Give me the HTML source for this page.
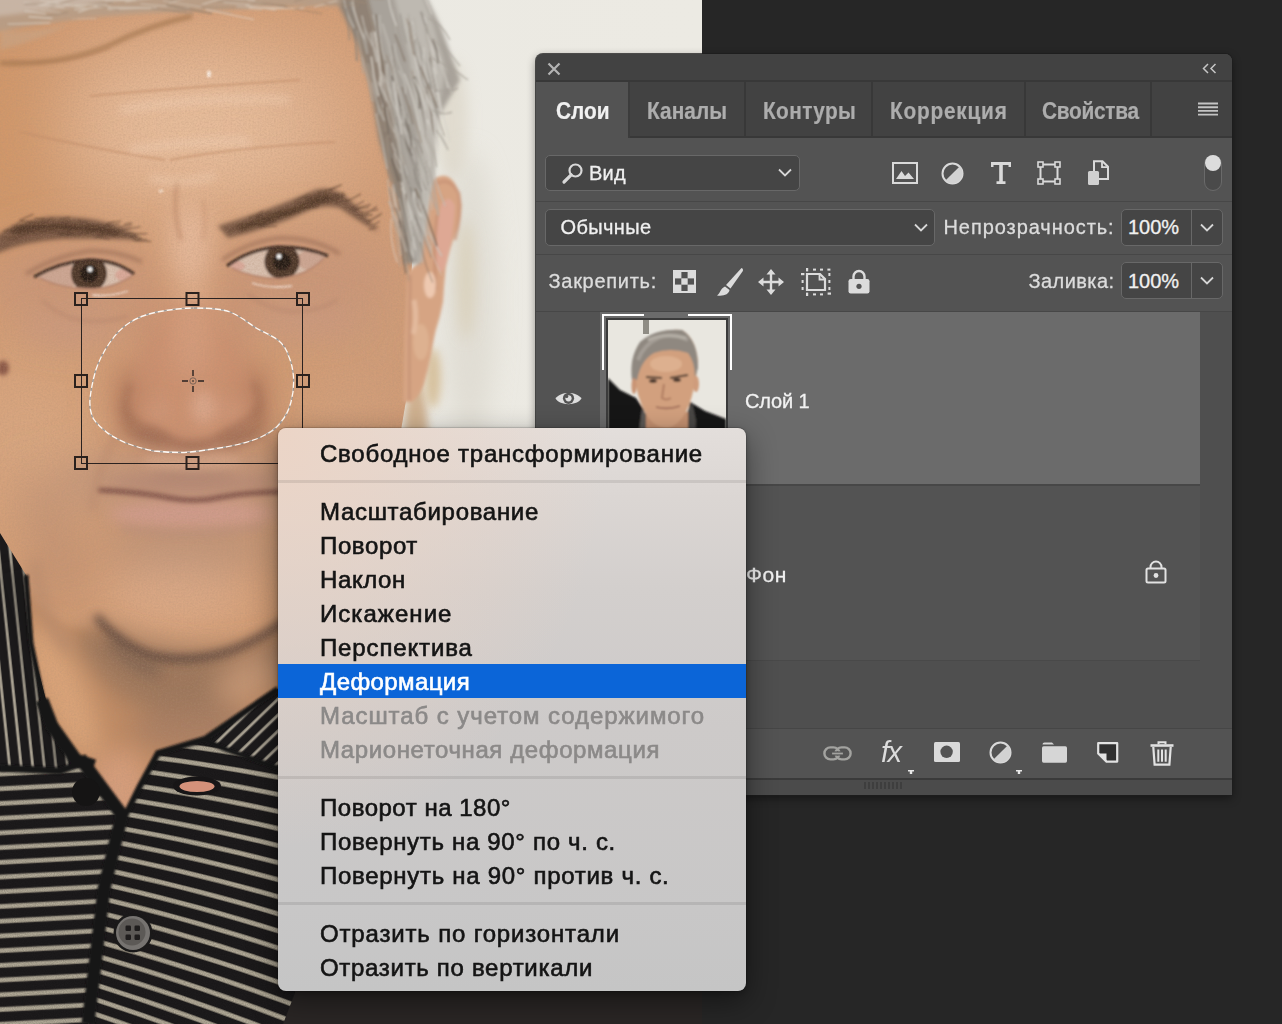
<!DOCTYPE html>
<html lang="ru">
<head>
<meta charset="utf-8">
<title>Photoshop</title>
<style>
html,body{margin:0;padding:0;}
body{width:1282px;height:1024px;overflow:hidden;background:#262626;position:relative;font-family:"Liberation Sans",sans-serif;}
.abs{position:absolute;}
#photo{position:absolute;left:0;top:0;width:702px;height:1024px;overflow:hidden;background:#e9e7df;}
#photo svg{position:absolute;left:0;top:0;}
/* ---------- panel ---------- */
#panel{position:absolute;left:536px;top:54px;width:696px;height:741px;background:#535353;border-radius:7px 7px 0 0;box-shadow:0 0 0 1px rgba(30,30,30,.75),0 3px 10px rgba(0,0,0,.45);overflow:hidden;}
#panel .hdr{position:absolute;left:0;top:0;width:696px;height:26px;background:#424242;}
#panel .hline{position:absolute;left:0;width:696px;height:2px;background:#383838;}
#panel .tabs{position:absolute;left:0;top:28px;width:696px;height:54px;background:#424242;}
.tab{position:absolute;top:28px;height:54px;box-sizing:border-box;border-right:2px solid #383838;color:#adadad;font-weight:700;font-size:20px;line-height:54px;white-space:nowrap;-webkit-text-stroke:.2px currentColor;}
.tab span{position:absolute;top:2px;font-size:23px;transform:scaleX(.905);transform-origin:0 50%;}
.tab.act{background:#535353;color:#f1f1f1;height:56px;border-right:2px solid #3c3c3c;}
.t{position:absolute;white-space:nowrap;font-size:20px;line-height:24px;color:#dcdcdc;-webkit-text-stroke:.3px currentColor;}
.box{position:absolute;box-sizing:border-box;background:#454545;border:1px solid #686868;border-radius:5px;}
.ico{position:absolute;overflow:visible;}
/* ---------- menu ---------- */
#menu{position:absolute;left:278px;top:428px;width:468px;height:563px;border-radius:8px;overflow:hidden;
 box-shadow:0 0 0 1px rgba(0,0,0,.12),0 10px 30px rgba(0,0,0,.45),0 2px 6px rgba(0,0,0,.25);
 background:
  radial-gradient(ellipse 330px 420px at 0px 0px,rgba(236,212,197,.95),rgba(236,212,197,0) 100%),
  linear-gradient(180deg,#e3dedb 0px,#dbd6d3 70px,#d3cfcd 160px,#cdcac9 300px,#c8c7c7 480px,#c5c5c5 563px);}
#menu .mi{position:absolute;left:42px;font-size:24px;line-height:34px;height:34px;color:#141414;white-space:nowrap;margin-top:1px;-webkit-text-stroke:.62px currentColor;}
#menu .mi.dis{color:#8b8988;}
#menu .hl{position:absolute;left:0;top:236px;width:468px;height:34px;background:#0b65d8;}
#menu .sep{position:absolute;left:0;width:468px;height:3px;margin-top:-1px;background:rgba(0,0,0,.085);}
</style>
</head>
<body>
<div id="photo">
<svg width="702" height="1024" viewBox="0 0 702 1024">
<defs>
<filter id="b1" filterUnits="userSpaceOnUse" x="-60" y="-60" width="830" height="1150"><feGaussianBlur stdDeviation="1"/></filter>
<filter id="b15" filterUnits="userSpaceOnUse" x="-60" y="-60" width="830" height="1150"><feGaussianBlur stdDeviation="1.5"/></filter>
<filter id="b2" filterUnits="userSpaceOnUse" x="-60" y="-60" width="830" height="1150"><feGaussianBlur stdDeviation="2.2"/></filter>
<filter id="b4" filterUnits="userSpaceOnUse" x="-60" y="-60" width="830" height="1150"><feGaussianBlur stdDeviation="4"/></filter>
<filter id="b7" filterUnits="userSpaceOnUse" x="-60" y="-60" width="830" height="1150"><feGaussianBlur stdDeviation="7"/></filter>
<filter id="b12" filterUnits="userSpaceOnUse" x="-60" y="-60" width="830" height="1150"><feGaussianBlur stdDeviation="12"/></filter>
<filter id="b22" filterUnits="userSpaceOnUse" x="-60" y="-60" width="830" height="1150"><feGaussianBlur stdDeviation="22"/></filter>
<filter id="b40" filterUnits="userSpaceOnUse" x="-60" y="-60" width="830" height="1150"><feGaussianBlur stdDeviation="40"/></filter>
<filter id="noise" x="0" y="0" width="100%" height="100%"><feTurbulence type="fractalNoise" baseFrequency="0.55" numOctaves="2" seed="3"/><feColorMatrix type="matrix" values="0 0 0 0 0.45  0 0 0 0 0.28  0 0 0 0 0.18  0.9 0.9 0 0 -0.72"/></filter>
<filter id="noise2" x="0" y="0" width="100%" height="100%"><feTurbulence type="fractalNoise" baseFrequency="0.9" numOctaves="1" seed="8"/><feColorMatrix type="matrix" values="0 0 0 0 0  0 0 0 0 0  0 0 0 0 0  0.7 0.7 0 0 -0.5"/></filter>
<pattern id="st" width="40" height="14.7" patternUnits="userSpaceOnUse"><rect width="40" height="14.7" fill="#1d1b1c"/><rect y="4.5" width="40" height="5.4" fill="#777165"/><rect y="5.4" width="40" height="3.6" fill="#b1a997"/></pattern>
<pattern id="stc" width="40" height="11.5" patternUnits="userSpaceOnUse"><rect width="40" height="11.5" fill="#1c1a1b"/><rect y="3.8" width="40" height="3.4" fill="#6f6a60"/><rect y="4.5" width="40" height="2" fill="#ada595"/></pattern>
<linearGradient id="wall" x1="0" x2="1" y1="0" y2="0"><stop offset="0" stop-color="#e2dfd6"/><stop offset="0.35" stop-color="#ebe9e2"/><stop offset="1" stop-color="#eceae3"/></linearGradient>
<clipPath id="skinclip"><path d="M0,0 H420 L426,120 L426,180 L412,262 L408,340 L406,400 L401,430 L398,520 L380,600 L360,700 L300,830 L0,830 Z"/></clipPath>
</defs>
<rect x="0" y="0" width="702" height="1024" fill="url(#wall)"/>
<ellipse cx="416" cy="440" rx="12" ry="60" fill="#c7a27a" opacity=".8" filter="url(#b4)"/>
<ellipse cx="470" cy="300" rx="26" ry="150" fill="#dcd8ce" opacity=".7" filter="url(#b12)"/>
<ellipse cx="452" cy="120" rx="16" ry="60" fill="#d9d2c2" opacity=".6" filter="url(#b7)"/>
<ellipse cx="466" cy="280" rx="9" ry="60" fill="#d8cdb4" opacity=".7" filter="url(#b7)"/>
<g clip-path="url(#skinclip)">
<rect x="0" y="0" width="460" height="840" fill="#d29c74"/>
<g filter="url(#b40)">
<ellipse cx="205" cy="125" rx="150" ry="85" fill="#e9c0a0" opacity=".9"/>
<ellipse cx="5" cy="140" rx="70" ry="130" fill="#cf9566" opacity=".85"/>
<ellipse cx="375" cy="330" rx="45" ry="140" fill="#cc9c7c" opacity=".75"/>
<ellipse cx="25" cy="440" rx="80" ry="90" fill="#d9a985" opacity=".8"/>
<ellipse cx="340" cy="120" rx="50" ry="90" fill="#d9a884" opacity=".7"/>
</g>
<g filter="url(#b22)">
<ellipse cx="75" cy="285" rx="90" ry="48" fill="#c8957a" opacity=".7"/>
<ellipse cx="300" cy="280" rx="90" ry="48" fill="#c8957a" opacity=".7"/>
<ellipse cx="192" cy="395" rx="78" ry="62" fill="#ca9070" opacity=".6"/>
<ellipse cx="190" cy="482" rx="135" ry="28" fill="#b8907b" opacity=".85"/>
<ellipse cx="190" cy="548" rx="95" ry="22" fill="#b38d78" opacity=".75"/>
<ellipse cx="178" cy="598" rx="75" ry="32" fill="#dcab88" opacity=".9"/>
<ellipse cx="52" cy="540" rx="18" ry="75" fill="#b38870" opacity=".65" transform="rotate(-18 52 540)"/>
<ellipse cx="340" cy="430" rx="45" ry="60" fill="#d3a07c" opacity=".7"/>
</g>
<g filter="url(#b12)">
<ellipse cx="190" cy="245" rx="22" ry="42" fill="#e8bc9f" opacity=".85"/>
<ellipse cx="192" cy="330" rx="19" ry="52" fill="#e0b092" opacity=".75"/>
<ellipse cx="130" cy="398" rx="15" ry="34" fill="#b0785b" opacity=".75"/>
<ellipse cx="254" cy="398" rx="15" ry="34" fill="#b0785b" opacity=".75"/>
<ellipse cx="72" cy="330" rx="52" ry="20" fill="#c99a80" opacity=".6"/>
<ellipse cx="306" cy="322" rx="56" ry="20" fill="#c99a80" opacity=".6"/>
<ellipse cx="150" cy="330" rx="14" ry="40" fill="#c69073" opacity=".6"/>
<ellipse cx="235" cy="330" rx="14" ry="40" fill="#c69073" opacity=".6"/>
</g>
<g filter="url(#b7)">
<ellipse cx="150" cy="437" rx="24" ry="7" fill="#8c5a47" opacity=".8" transform="rotate(16 150 437)"/>
<ellipse cx="238" cy="437" rx="24" ry="7" fill="#8c5a47" opacity=".8" transform="rotate(-16 238 437)"/>
<ellipse cx="193" cy="447" rx="24" ry="6" fill="#a06c56" opacity=".75"/>
<ellipse cx="128" cy="418" rx="6" ry="18" fill="#a06c52" opacity=".7"/>
<ellipse cx="258" cy="418" rx="6" ry="18" fill="#a06c52" opacity=".7"/>
<ellipse cx="203" cy="407" rx="12" ry="17" fill="#ecc2ab" opacity=".85"/>
<ellipse cx="160" cy="410" rx="14" ry="12" fill="#d39c80" opacity=".7"/>
<ellipse cx="230" cy="410" rx="14" ry="12" fill="#d39c80" opacity=".7"/>
<ellipse cx="192" cy="514" rx="82" ry="13" fill="#d09c8e" opacity=".9"/>
<ellipse cx="192" cy="483" rx="85" ry="8" fill="#b38674" opacity=".75"/>
<ellipse cx="192" cy="470" rx="40" ry="6" fill="#a9826f" opacity=".6"/>
</g>
<path d="M163,300 C158,330 140,355 130,385 C122,405 126,420 140,424 C152,428 160,430 168,436 C180,446 206,446 218,436 C228,428 240,424 250,418 C262,410 260,395 252,380 C240,352 222,330 216,300 Z" fill="#c98d6e" opacity=".45" filter="url(#b4)"/>
<g fill="none" filter="url(#b4)"><path d="M131,384 C121,405 125,421 142,425" stroke="#9c6850" stroke-width="6" opacity=".7"/><path d="M253,381 C263,400 261,413 247,420" stroke="#9c6850" stroke-width="6" opacity=".7"/><path d="M142,427 Q158,430 168,438 Q192,452 218,438 Q230,429 248,421" stroke="#93604a" stroke-width="5" opacity=".75"/></g>
<ellipse cx="192" cy="462" rx="50" ry="8" fill="#d9a98b" opacity=".7" filter="url(#b4)"/>
<path d="M98,490 Q140,492 170,498 Q196,503 222,497 Q250,492 282,492" fill="none" stroke="#7b5046" stroke-width="5" opacity=".9" filter="url(#b2)"/>
<path d="M120,528 Q190,540 262,526" fill="none" stroke="#b48a78" stroke-width="5" opacity=".6" filter="url(#b4)"/>
<g fill="none" stroke="#c38e6a" stroke-width="2.2" opacity=".6" filter="url(#b1)"><path d="M170,160 Q230,148 335,142"/><path d="M20,132 Q100,150 165,160"/><path d="M90,96 Q200,86 300,80"/><path d="M10,60 Q60,68 110,48"/></g>
<path d="M177,182 Q172,212 181,240" fill="none" stroke="#bb8666" stroke-width="4.5" opacity=".55" filter="url(#b2)"/>
<path d="M203,200 Q207,222 203,240" fill="none" stroke="#c28d6d" stroke-width="3.5" opacity=".4" filter="url(#b2)"/>
<g fill="none" stroke="#f6d9c2" stroke-width="7" opacity=".45" filter="url(#b4)"><path d="M120,110 Q200,96 290,100"/><path d="M130,150 Q200,140 250,142"/><path d="M150,178 Q180,186 215,176"/></g>
<g fill="#fff6ee" filter="url(#b1)"><ellipse cx="209" cy="74" rx="2" ry="3.4" opacity=".9"/><ellipse cx="161" cy="191" rx="2.4" ry="1.6" opacity=".7"/></g>
<g filter="url(#b2)">
<path d="M-5,238 Q10,222 50,217 Q95,216 122,228 Q136,234 142,240 Q100,238 62,239 Q25,241 -5,254 Z" fill="#6a4e3c" opacity=".85"/>
<path d="M15,230 Q60,222 120,233" stroke="#46301f" stroke-width="6" fill="none" opacity=".7"/>
<path d="M218,226 Q270,210 315,190 Q332,186 345,196 Q364,212 378,232 Q360,222 340,208 Q326,204 310,210 Q272,228 228,238 Z" fill="#6a4e3c" opacity=".85"/>
<path d="M238,229 Q290,212 330,196" stroke="#46301f" stroke-width="6" fill="none" opacity=".65"/>
</g>
<g fill="none" stroke="#4d3628" stroke-width="1.3" opacity=".55" filter="url(#b1)"><path d="M61.1,228.6 l17.1,-1.9"/><path d="M68.6,229.2 l9.8,-0.8"/><path d="M85.0,233.5 l8.7,-2.0"/><path d="M12.2,234.9 l13.7,-5.9"/><path d="M132.6,239.8 l14.5,-0.1"/><path d="M21.3,219.3 l12.3,-5.1"/><path d="M25.7,223.4 l8.2,-0.9"/><path d="M59.5,234.0 l13.2,0.1"/><path d="M67.5,230.6 l12.2,-3.0"/><path d="M134.7,240.6 l16.4,0.9"/><path d="M42.6,222.6 l10.1,-4.1"/><path d="M103.4,226.9 l16.2,-2.7"/><path d="M129.3,237.3 l7.7,-2.3"/><path d="M122.9,229.6 l17.6,-2.8"/><path d="M9.9,231.6 l15.3,-3.9"/><path d="M11.8,225.9 l17.6,1.6"/><path d="M15.9,224.0 l8.3,-3.5"/><path d="M107.6,222.9 l13.5,-1.7"/><path d="M25.7,232.7 l9.3,0.1"/><path d="M15.7,227.3 l9.8,-2.5"/><path d="M131.1,236.6 l10.9,2.0"/><path d="M28.4,226.2 l16.5,0.2"/><path d="M13.5,238.2 l9.8,-2.6"/><path d="M104.3,225.6 l10.2,-4.1"/><path d="M12.2,230.6 l10.4,-0.2"/><path d="M50.2,226.7 l17.5,-1.7"/><path d="M77.6,234.7 l9.3,-3.2"/><path d="M122.6,236.2 l10.0,-3.1"/><path d="M99.8,236.9 l9.7,2.2"/><path d="M119.1,231.8 l11.4,-4.3"/><path d="M5.2,238.3 l10.4,0.6"/><path d="M34.7,234.1 l13.6,-3.2"/><path d="M23.7,232.6 l8.4,-2.4"/><path d="M75.5,234.4 l13.7,-3.4"/><path d="M123.8,224.6 l7.9,-2.0"/><path d="M60.2,219.1 l9.6,-1.7"/><path d="M77.2,220.7 l11.4,2.1"/><path d="M132.4,234.0 l14.9,-0.4"/><path d="M18.9,219.8 l8.0,1.6"/><path d="M94.6,237.1 l8.2,0.1"/><path d="M65.1,231.9 l10.8,2.9"/><path d="M10.2,230.0 l15.1,2.9"/><path d="M99.5,232.4 l15.6,3.2"/><path d="M47.5,231.1 l16.8,2.9"/><path d="M56.3,233.0 l16.6,-0.6"/><path d="M84.4,225.7 l13.8,-0.2"/><path d="M10.8,231.8 l17.7,3.2"/><path d="M98.3,226.4 l15.3,-0.5"/><path d="M59.5,233.9 l8.8,0.8"/><path d="M4.0,231.5 l12.3,-3.5"/><path d="M94.3,228.2 l13.8,2.9"/><path d="M34.5,218.6 l11.0,0.4"/><path d="M27.3,221.9 l17.1,0.4"/><path d="M59.7,234.9 l11.3,0.3"/><path d="M26.8,226.9 l15.7,3.2"/><path d="M118.8,227.6 l13.5,-3.0"/><path d="M18.4,228.6 l16.2,2.5"/><path d="M96.0,236.9 l10.2,-3.4"/><path d="M60.8,223.2 l10.0,-1.5"/><path d="M84.5,227.8 l11.0,1.7"/><path d="M372.4,226.1 l7.3,-4.9"/><path d="M356.3,208.3 l14.6,-3.9"/><path d="M273.4,219.7 l7.1,-4.1"/><path d="M294.9,201.3 l14.6,-7.3"/><path d="M248.7,218.2 l13.5,-4.7"/><path d="M320.6,200.8 l16.1,-0.4"/><path d="M328.6,191.6 l11.2,-6.1"/><path d="M229.6,231.0 l13.3,-7.3"/><path d="M268.0,215.4 l14.3,-4.3"/><path d="M318.3,203.1 l11.8,-1.5"/><path d="M361.2,212.6 l17.1,-2.9"/><path d="M247.1,224.5 l14.2,-0.8"/><path d="M283.4,213.0 l16.7,-2.1"/><path d="M366.8,222.1 l12.8,-6.8"/><path d="M334.1,202.6 l14.2,-2.5"/><path d="M259.4,226.3 l17.8,-0.2"/><path d="M306.9,207.7 l11.2,-0.6"/><path d="M353.8,210.7 l8.3,-3.0"/><path d="M308.9,206.6 l10.7,-7.2"/><path d="M346.9,201.6 l14.0,-7.7"/><path d="M277.2,218.3 l8.2,-4.7"/><path d="M303.9,207.8 l16.1,-3.1"/><path d="M367.0,222.7 l14.8,-9.3"/><path d="M260.5,220.7 l10.8,-1.8"/><path d="M321.9,198.5 l15.8,-4.4"/><path d="M273.8,213.8 l16.4,-1.0"/><path d="M258.6,225.9 l16.9,-5.1"/><path d="M312.2,197.5 l12.7,-4.0"/><path d="M317.0,193.4 l16.9,-5.2"/><path d="M286.9,215.0 l13.0,-4.2"/><path d="M329.6,189.4 l12.5,-4.7"/><path d="M368.7,229.9 l10.1,-3.4"/><path d="M246.7,224.4 l16.1,-1.0"/><path d="M298.1,204.2 l9.6,-2.3"/><path d="M364.0,215.3 l13.1,-8.9"/><path d="M256.5,217.9 l13.6,-6.0"/><path d="M280.2,214.9 l8.9,-1.5"/><path d="M246.0,225.6 l9.3,-4.9"/><path d="M306.0,203.0 l11.0,-4.1"/><path d="M305.8,199.2 l9.8,-2.2"/><path d="M321.9,198.6 l16.1,-3.9"/><path d="M353.9,209.2 l15.3,-1.8"/><path d="M360.7,215.4 l11.1,-0.5"/><path d="M260.1,227.4 l14.6,-8.5"/><path d="M263.2,222.5 l9.0,-5.6"/><path d="M350.3,209.1 l13.7,-8.1"/><path d="M287.2,213.3 l7.2,-3.8"/><path d="M328.3,201.6 l15.2,-9.1"/><path d="M302.3,208.9 l12.8,-2.5"/><path d="M255.8,216.0 l7.5,-5.0"/><path d="M309.1,203.0 l11.9,-6.8"/><path d="M255.1,218.1 l16.4,-0.1"/><path d="M364.3,215.0 l8.6,-0.3"/><path d="M295.9,211.3 l10.7,-3.6"/><path d="M303.7,203.8 l11.5,-7.9"/><path d="M331.1,200.6 l9.3,-3.2"/><path d="M336.7,198.7 l8.7,-4.9"/><path d="M303.3,198.1 l16.8,-2.0"/><path d="M331.6,201.2 l13.4,-5.1"/><path d="M316.1,200.3 l17.7,-2.1"/></g>
<clipPath id="le"><path d="M36,276 Q60,262 89,260 Q115,260 133,274 Q115,287 94,288 Q60,288 36,276 Z"/></clipPath><clipPath id="re"><path d="M228,266 Q250,249 278,247 Q308,247 326,256 Q308,274 280,278 Q250,277 228,266 Z"/></clipPath>
<g filter="url(#b2)">
<path d="M26,274 Q55,256 89,251 Q118,250 142,262" fill="none" stroke="#946852" stroke-width="3.5" opacity=".7"/>
<path d="M222,260 Q250,241 280,238 Q315,238 340,254" fill="none" stroke="#946852" stroke-width="3.5" opacity=".7"/>
</g>
<g filter="url(#b1)">
<path d="M36,276 Q60,262 89,260 Q115,260 133,274 Q115,287 94,288 Q60,288 36,276 Z" fill="#d8bfae"/><path d="M228,266 Q250,249 278,247 Q308,247 326,256 Q308,274 280,278 Q250,277 228,266 Z" fill="#d8bfae"/>
<g clip-path="url(#le)"><ellipse cx="60" cy="276" rx="22" ry="12" fill="#c9a08c" opacity=".8"/><circle cx="89" cy="273.5" r="18" fill="#4d372c"/><circle cx="89" cy="273.5" r="9" fill="#261a15"/><ellipse cx="124" cy="275" rx="9" ry="6" fill="#d9a99a"/></g>
<g clip-path="url(#re)"><ellipse cx="312" cy="260" rx="16" ry="10" fill="#c9a08c" opacity=".8"/><circle cx="282" cy="261.5" r="17.6" fill="#4d372c"/><circle cx="282" cy="261.5" r="9" fill="#261a15"/><ellipse cx="236" cy="266" rx="9" ry="5" fill="#d9a99a"/></g>
<path d="M34,277 Q60,262 89,260 Q115,260 134,274" fill="none" stroke="#3e2b23" stroke-width="3.6" opacity=".9"/>
<path d="M227,266 Q250,249 278,247 Q308,247 328,256" fill="none" stroke="#3e2b23" stroke-width="3.6" opacity=".9"/>
<path d="M40,278 Q62,289 94,289 Q116,287 132,276" fill="none" stroke="#b07f6c" stroke-width="1.6" opacity=".8"/>
<path d="M232,268 Q252,278 280,279 Q308,275 324,258" fill="none" stroke="#b07f6c" stroke-width="1.6" opacity=".8"/>
<circle cx="90" cy="269.5" r="2.4" fill="#fff"/><circle cx="279" cy="256.5" r="2.4" fill="#fff"/>
</g>
<g fill="none" stroke="#f6e8de" stroke-width="1.8" opacity=".75" filter="url(#b1)"><path d="M92,295 Q110,297 128,291"/><path d="M252,283 Q270,289 292,286"/></g>
<g fill="none" filter="url(#b2)"><path d="M42,300 Q75,332 128,316" stroke="#b07f68" stroke-width="3" opacity=".5"/><path d="M248,294 Q290,326 338,300" stroke="#b07f68" stroke-width="3" opacity=".5"/></g>
<g fill="none" filter="url(#b4)"><path d="M118,432 Q96,470 92,512" stroke="#b4846a" stroke-width="6" opacity=".5"/><path d="M264,432 Q286,468 292,505" stroke="#b4846a" stroke-width="6" opacity=".5"/></g>
<ellipse cx="3" cy="368" rx="6" ry="7.5" fill="#8a5846" filter="url(#b2)"/>
<path d="M28,590 Q60,640 104,626 Q140,654 176,660 Q222,658 282,626 L400,560 L400,840 L0,840 L0,560 Z" fill="#bf8a64" filter="url(#b4)"/>
<g filter="url(#b12)">
<path d="M70,640 Q120,720 200,720 Q260,710 300,650 L300,630 Q200,670 100,622 Z" fill="#8a6b58" opacity=".65"/>
<ellipse cx="200" cy="730" rx="70" ry="22" fill="#a57c62" opacity=".8"/>
<ellipse cx="62" cy="690" rx="24" ry="75" fill="#dca67c" opacity=".9" transform="rotate(-24 62 690)"/>
<ellipse cx="250" cy="680" rx="36" ry="20" fill="#c99a78" opacity=".8" transform="rotate(-25 250 680)"/>
<ellipse cx="120" cy="790" rx="30" ry="40" fill="#d7a07e" opacity=".9"/>
</g>
<path d="M96,616 Q120,646 152,656 Q190,664 230,651 Q260,640 286,620" fill="none" stroke="#57433a" stroke-width="8" opacity=".85" filter="url(#b4)"/>
<path d="M110,640 Q130,665 160,672" fill="none" stroke="#6b5548" stroke-width="10" opacity=".7" filter="url(#b7)"/>
<path d="M34,560 Q40,620 70,650" fill="none" stroke="#b3876c" stroke-width="14" opacity=".6" filter="url(#b7)"/>
<rect x="0" y="0" width="440" height="840" filter="url(#noise)" opacity=".4"/>
</g>
<ellipse cx="433" cy="378" rx="8" ry="30" fill="#d2b88e" opacity=".8" filter="url(#b4)"/>
<g filter="url(#b15)">
<path d="M432,180 Q440,175 446,176 Q458,180 461.5,205 Q461,222 454.6,235 Q449,252 445.8,267 Q444,285 443,302 Q440,318 435.6,331 Q433,343 431,355 Q428,370 424,384 Q419,397 412,402 L403,402 L404,340 L407,273 L419,262 L428,200 Z" fill="#d6a483"/>
<path d="M441,205 Q449,192 455,206 Q453,240 446,262 Q441,282 436,262 Q434,235 441,205 Z" fill="#dfa896" opacity=".9"/>
<path d="M436,184 Q450,176 459,194 Q462,215 455,240" fill="none" stroke="#c48f73" stroke-width="3" opacity=".7"/>
<path d="M437,215 Q433,250 436,290" fill="none" stroke="#b98168" stroke-width="3" opacity=".5"/>
<ellipse cx="430" cy="285" rx="6" ry="13" fill="#f2d0b8" opacity=".85"/>
<ellipse cx="421" cy="342" rx="8" ry="18" fill="#deb291" opacity=".9"/>
<path d="M414,300 Q418,320 413,334" fill="none" stroke="#e8c3a8" stroke-width="5" opacity=".7"/>
<path d="M410.5,275 Q409,340 409.5,400" fill="none" stroke="#b48168" stroke-width="2" opacity=".55"/>
</g>
<g filter="url(#b2)">
<path d="M326,-20 L336,0 L357,42 L370,84 L379,140 L397,200 L404,264 L421,264 L430,200 L434,178 L438,118 L460,80 L440,25 L428,0 L424,-20 Z" fill="#a8a29a"/>
<path d="M326,-20 L336,0 L357,42 L370,84 L379,140 L397,200 L404,264 L411,264 L404,190 L394,120 L384,60 L368,0 L362,-20 Z" fill="#8a7a6c" opacity=".8"/>
<path d="M390,-20 L395,0 L410,60 L418,130 L420,200 L424,240 L430,200 L434,150 L438,110 L446,70 L432,20 L424,0 L420,-20 Z" fill="#c2bdb5" opacity=".85"/>
<path d="M-20,-20 H350 L340,6 Q300,6 260,8 Q200,10 150,13 Q100,16 60,21 Q25,27 -20,34 Z" fill="#b39d8a" opacity=".8"/>
<path d="M-20,-20 H210 Q100,6 -20,18 Z" fill="#cdbfb0" opacity=".7"/>
<path d="M0,30 Q30,34 70,24 Q40,40 0,50 Z" fill="#c4a98f" opacity=".45"/>
<path d="M0,63 Q60,66 110,45 Q150,25 192,16" fill="none" stroke="#a2764f" stroke-width="4.5" opacity=".8"/>
</g>
<g fill="none" opacity=".7" filter="url(#b1)"><path d="M429.5,50.7 Q432.5,79.2 439.0,107.6" stroke="#776758" stroke-width="1.0"/><path d="M398.1,116.6 Q401.0,136.3 412.5,156.0" stroke="#6c6258" stroke-width="1.7"/><path d="M398.6,70.3 Q406.6,82.0 405.7,93.7" stroke="#d5d1c9" stroke-width="1.1"/><path d="M398.4,146.5 Q404.6,172.5 410.5,198.4" stroke="#9a8b7c" stroke-width="0.9"/><path d="M387.3,106.9 Q387.4,121.0 395.4,135.0" stroke="#d5d1c9" stroke-width="0.9"/><path d="M391.9,45.7 Q393.5,68.9 399.9,92.1" stroke="#776758" stroke-width="0.8"/><path d="M385.9,54.8 Q397.4,77.6 398.9,100.5" stroke="#9a8b7c" stroke-width="1.5"/><path d="M423.3,139.9 Q430.7,153.5 429.4,167.0" stroke="#d5d1c9" stroke-width="1.3"/><path d="M435.2,80.7 Q442.4,110.7 449.7,140.7" stroke="#d5d1c9" stroke-width="1.3"/><path d="M390.8,56.8 Q395.9,75.3 399.8,93.7" stroke="#c9c4bc" stroke-width="1.6"/><path d="M415.1,56.6 Q423.5,72.9 429.2,89.2" stroke="#6c6258" stroke-width="1.5"/><path d="M415.7,86.1 Q424.6,98.5 423.6,111.0" stroke="#776758" stroke-width="0.9"/><path d="M391.2,211.9 Q402.3,242.5 408.2,273.0" stroke="#c9c4bc" stroke-width="1.1"/><path d="M349.3,0.7 Q356.3,30.9 356.9,61.2" stroke="#8a847c" stroke-width="2.0"/><path d="M385.1,131.9 Q390.4,156.6 398.5,181.4" stroke="#6c6258" stroke-width="1.8"/><path d="M380.6,26.4 Q386.6,40.9 388.8,55.4" stroke="#b0aaa1" stroke-width="1.6"/><path d="M419.1,75.5 Q426.8,102.6 439.8,129.6" stroke="#b0aaa1" stroke-width="1.7"/><path d="M424.3,16.8 Q431.6,45.6 436.7,74.4" stroke="#e2ded6" stroke-width="1.1"/><path d="M416.3,160.4 Q418.8,175.6 426.3,190.7" stroke="#6c6258" stroke-width="1.0"/><path d="M418.6,220.2 Q427.8,247.9 441.9,275.5" stroke="#d5d1c9" stroke-width="0.8"/><path d="M343.5,-3.7 Q345.4,12.1 354.0,28.0" stroke="#c1bcb4" stroke-width="1.9"/><path d="M434.6,45.2 Q443.6,66.6 447.7,88.1" stroke="#e2ded6" stroke-width="1.2"/><path d="M388.9,187.1 Q393.7,201.9 393.5,216.7" stroke="#6c6258" stroke-width="1.3"/><path d="M378.3,81.7 Q383.2,97.3 382.9,112.9" stroke="#e2ded6" stroke-width="1.1"/><path d="M393.2,184.1 Q394.9,210.0 405.0,235.9" stroke="#c9c4bc" stroke-width="1.9"/><path d="M394.0,9.5 Q393.5,32.1 402.8,54.6" stroke="#b0aaa1" stroke-width="1.8"/><path d="M430.3,62.9 Q437.1,88.0 440.0,113.2" stroke="#c9c4bc" stroke-width="1.7"/><path d="M371.2,56.5 Q373.0,76.4 378.4,96.3" stroke="#e2ded6" stroke-width="1.9"/><path d="M410.3,93.6 Q419.5,125.2 422.6,156.8" stroke="#b0aaa1" stroke-width="1.3"/><path d="M385.7,61.6 Q386.9,82.8 390.7,104.0" stroke="#9a8b7c" stroke-width="1.1"/><path d="M392.0,75.9 Q396.5,95.7 403.6,115.4" stroke="#6c6258" stroke-width="1.7"/><path d="M378.5,81.7 Q390.8,104.5 395.4,127.4" stroke="#c1bcb4" stroke-width="1.7"/><path d="M361.9,56.1 Q368.8,78.9 372.8,101.7" stroke="#b0aaa1" stroke-width="2.0"/><path d="M387.7,179.0 Q389.4,203.2 395.6,227.3" stroke="#c1bcb4" stroke-width="1.2"/><path d="M373.2,14.8 Q377.2,27.3 378.3,39.9" stroke="#c1bcb4" stroke-width="1.7"/><path d="M374.7,47.7 Q380.1,75.7 388.6,103.7" stroke="#c9c4bc" stroke-width="1.3"/><path d="M411.1,217.5 Q420.6,239.9 421.9,262.2" stroke="#c1bcb4" stroke-width="1.6"/><path d="M425.4,86.5 Q433.2,113.4 433.1,140.4" stroke="#776758" stroke-width="1.8"/><path d="M410.2,215.1 Q413.8,238.5 418.9,262.0" stroke="#c1bcb4" stroke-width="1.3"/><path d="M412.3,24.4 Q420.7,56.4 431.4,88.4" stroke="#8a847c" stroke-width="1.2"/><path d="M392.1,114.3 Q396.7,144.7 408.1,175.0" stroke="#c1bcb4" stroke-width="1.2"/><path d="M420.3,206.1 Q426.4,231.2 441.9,256.3" stroke="#c9c4bc" stroke-width="1.9"/><path d="M362.0,15.5 Q364.7,31.1 372.8,46.7" stroke="#c9c4bc" stroke-width="1.5"/><path d="M375.7,33.5 Q382.8,49.4 381.2,65.3" stroke="#b0aaa1" stroke-width="1.6"/><path d="M427.0,119.3 Q435.9,141.0 439.4,162.6" stroke="#e2ded6" stroke-width="1.6"/><path d="M421.0,11.7 Q426.6,30.9 434.5,50.1" stroke="#8a847c" stroke-width="1.8"/><path d="M406.7,114.0 Q412.3,132.5 410.5,151.0" stroke="#6c6258" stroke-width="1.9"/><path d="M404.0,202.7 Q411.4,219.5 413.4,236.2" stroke="#8a847c" stroke-width="1.3"/><path d="M426.5,24.0 Q432.4,50.9 447.3,77.8" stroke="#b0aaa1" stroke-width="1.4"/><path d="M387.7,124.4 Q385.6,141.2 391.9,158.1" stroke="#8a847c" stroke-width="1.8"/><path d="M414.7,53.4 Q420.8,67.2 421.9,80.9" stroke="#c9c4bc" stroke-width="0.9"/><path d="M406.3,117.7 Q406.4,129.2 414.7,140.6" stroke="#6c6258" stroke-width="1.9"/><path d="M394.2,184.2 Q404.6,207.5 405.7,230.8" stroke="#8a847c" stroke-width="1.9"/><path d="M392.9,64.3 Q397.2,89.1 397.8,113.8" stroke="#c1bcb4" stroke-width="1.2"/><path d="M380.2,14.9 Q377.8,37.5 385.1,60.1" stroke="#c1bcb4" stroke-width="1.6"/><path d="M416.9,78.6 Q424.4,95.5 424.8,112.5" stroke="#c9c4bc" stroke-width="1.7"/><path d="M415.0,188.5 Q428.4,217.3 436.8,246.2" stroke="#776758" stroke-width="1.9"/><path d="M414.0,214.2 Q425.1,235.9 431.5,257.6" stroke="#6c6258" stroke-width="1.0"/><path d="M433.1,67.4 Q436.4,91.8 442.0,116.1" stroke="#e2ded6" stroke-width="1.3"/><path d="M400.1,13.9 Q402.2,28.7 406.3,43.5" stroke="#8a847c" stroke-width="1.0"/><path d="M410.0,186.7 Q413.9,199.7 419.1,212.7" stroke="#8a847c" stroke-width="2.0"/><path d="M399.5,171.2 Q405.8,201.8 406.8,232.4" stroke="#8a847c" stroke-width="1.6"/><path d="M401.5,183.0 Q407.9,201.4 412.0,219.9" stroke="#d5d1c9" stroke-width="1.7"/><path d="M421.4,64.7 Q421.5,82.5 425.1,100.3" stroke="#9a8b7c" stroke-width="0.8"/><path d="M411.9,70.4 Q413.9,84.1 420.0,97.9" stroke="#9a8b7c" stroke-width="1.2"/><path d="M408.2,14.1 Q410.9,31.3 416.5,48.6" stroke="#b0aaa1" stroke-width="1.5"/><path d="M382.9,107.6 Q387.9,135.8 388.7,164.1" stroke="#9a8b7c" stroke-width="2.0"/><path d="M407.9,209.9 Q410.3,222.5 413.1,235.1" stroke="#c1bcb4" stroke-width="1.0"/><path d="M392.1,88.1 Q390.3,102.4 396.0,116.7" stroke="#b0aaa1" stroke-width="1.4"/><path d="M393.9,218.8 Q405.5,249.9 408.8,280.9" stroke="#9a8b7c" stroke-width="0.9"/><path d="M413.6,29.6 Q426.1,59.5 432.1,89.3" stroke="#8a847c" stroke-width="0.9"/><path d="M429.0,57.8 Q433.4,74.8 436.8,91.9" stroke="#8a847c" stroke-width="1.0"/><path d="M345.9,7.9 Q349.3,24.3 349.2,40.7" stroke="#8a847c" stroke-width="1.2"/><path d="M401.1,163.4 Q404.2,188.5 409.1,213.7" stroke="#d5d1c9" stroke-width="1.0"/><path d="M388.6,-2.2 Q390.2,11.8 396.6,25.8" stroke="#e2ded6" stroke-width="1.4"/><path d="M396.5,123.5 Q406.2,146.6 416.0,169.6" stroke="#8a847c" stroke-width="1.3"/><path d="M375.7,14.1 Q379.6,46.3 383.8,78.4" stroke="#776758" stroke-width="1.7"/><path d="M415.8,223.7 Q420.3,253.1 432.6,282.5" stroke="#776758" stroke-width="0.9"/><path d="M399.8,210.7 Q401.7,233.1 412.5,255.6" stroke="#d5d1c9" stroke-width="1.2"/><path d="M425.9,160.5 Q435.8,188.1 438.2,215.7" stroke="#b0aaa1" stroke-width="1.9"/><path d="M423.9,47.4 Q422.4,65.0 428.8,82.7" stroke="#d5d1c9" stroke-width="1.4"/><path d="M407.4,203.8 Q412.8,230.7 413.6,257.7" stroke="#c1bcb4" stroke-width="2.0"/><path d="M400.9,194.8 Q408.9,218.3 411.9,241.8" stroke="#8a847c" stroke-width="1.1"/><path d="M429.7,123.2 Q432.8,137.5 434.3,151.9" stroke="#c1bcb4" stroke-width="1.9"/><path d="M391.0,96.5 Q405.4,121.1 412.0,145.8" stroke="#8a847c" stroke-width="0.9"/><path d="M402.0,181.6 Q406.0,201.2 410.9,220.7" stroke="#d5d1c9" stroke-width="1.2"/><path d="M386.7,63.7 Q386.3,79.0 391.8,94.3" stroke="#c9c4bc" stroke-width="1.9"/><path d="M413.6,191.9 Q412.8,204.5 421.6,217.0" stroke="#e2ded6" stroke-width="1.9"/><path d="M417.4,139.3 Q426.9,163.0 428.9,186.7" stroke="#6c6258" stroke-width="1.0"/><path d="M350.4,1.8 Q360.9,28.0 367.1,54.2" stroke="#b0aaa1" stroke-width="1.8"/><path d="M408.0,21.7 Q420.2,53.0 425.1,84.3" stroke="#c1bcb4" stroke-width="1.0"/><path d="M407.0,18.4 Q413.2,36.3 413.6,54.2" stroke="#9a8b7c" stroke-width="1.6"/><path d="M413.4,77.5 Q424.3,108.4 427.3,139.2" stroke="#6c6258" stroke-width="2.0"/><path d="M370.8,32.4 Q373.2,47.3 376.8,62.2" stroke="#c9c4bc" stroke-width="2.0"/><path d="M407.6,114.2 Q409.7,127.0 413.4,139.9" stroke="#b0aaa1" stroke-width="1.4"/><path d="M386.8,123.6 Q398.5,154.4 409.2,185.3" stroke="#8a847c" stroke-width="1.1"/><path d="M426.7,33.8 Q440.2,63.5 451.9,93.2" stroke="#c9c4bc" stroke-width="1.9"/><path d="M422.0,-9.4 Q426.8,2.6 431.9,14.5" stroke="#e2ded6" stroke-width="1.2"/><path d="M366.8,-2.5 Q373.4,27.3 379.4,57.1" stroke="#9a8b7c" stroke-width="1.7"/><path d="M421.8,129.6 Q423.2,143.5 429.5,157.5" stroke="#c9c4bc" stroke-width="1.5"/><path d="M417.5,158.3 Q418.7,175.6 425.9,193.0" stroke="#c9c4bc" stroke-width="1.1"/><path d="M391.2,218.1 Q389.3,240.3 397.1,262.5" stroke="#e2ded6" stroke-width="1.0"/><path d="M401.1,106.6 Q412.0,126.8 414.7,147.0" stroke="#d5d1c9" stroke-width="0.9"/><path d="M408.8,123.7 Q417.4,150.9 427.6,178.0" stroke="#8a847c" stroke-width="0.9"/><path d="M422.7,153.5 Q430.6,181.8 432.1,210.2" stroke="#c9c4bc" stroke-width="0.9"/><path d="M372.6,30.3 Q374.7,45.8 378.6,61.4" stroke="#c9c4bc" stroke-width="0.9"/><path d="M381.5,75.6 Q394.9,105.1 406.3,134.5" stroke="#c9c4bc" stroke-width="1.7"/><path d="M412.2,21.6 Q418.5,45.6 417.1,69.6" stroke="#d5d1c9" stroke-width="1.1"/><path d="M382.3,23.3 Q389.1,41.1 392.3,58.9" stroke="#c1bcb4" stroke-width="2.0"/><path d="M429.8,158.5 Q435.0,182.3 445.3,206.2" stroke="#c1bcb4" stroke-width="1.5"/><path d="M432.6,98.5 Q437.5,117.4 444.3,136.3" stroke="#6c6258" stroke-width="0.8"/><path d="M383.5,142.7 Q386.1,162.2 391.0,181.7" stroke="#8a847c" stroke-width="1.4"/><path d="M401.4,188.1 Q413.8,215.0 420.4,241.8" stroke="#e2ded6" stroke-width="1.1"/><path d="M405.5,179.0 Q410.0,199.5 414.7,219.9" stroke="#b0aaa1" stroke-width="1.4"/><path d="M389.4,137.3 Q396.7,159.4 400.1,181.6" stroke="#776758" stroke-width="0.9"/><path d="M385.6,75.3 Q390.4,86.7 394.0,98.2" stroke="#b0aaa1" stroke-width="1.4"/><path d="M391.9,142.6 Q394.6,155.4 402.4,168.1" stroke="#e2ded6" stroke-width="1.0"/><path d="M390.7,187.2 Q399.6,221.5 400.8,255.7" stroke="#c9c4bc" stroke-width="0.9"/><path d="M420.2,66.4 Q428.7,87.2 437.5,108.0" stroke="#776758" stroke-width="1.5"/><path d="M395.1,34.1 Q400.4,47.8 404.9,61.5" stroke="#776758" stroke-width="1.3"/><path d="M409.0,22.0 Q409.3,39.7 415.4,57.5" stroke="#776758" stroke-width="1.0"/><path d="M414.7,55.9 Q418.5,75.8 426.4,95.8" stroke="#e2ded6" stroke-width="1.1"/><path d="M380.4,71.1 Q388.4,82.5 390.2,94.0" stroke="#c9c4bc" stroke-width="1.5"/><path d="M399.1,219.3 Q401.0,246.4 405.8,273.6" stroke="#6c6258" stroke-width="1.5"/><path d="M414.3,18.7 Q416.9,39.1 421.0,59.4" stroke="#b0aaa1" stroke-width="0.9"/><path d="M372.1,82.2 Q375.4,101.5 384.2,120.8" stroke="#c9c4bc" stroke-width="1.6"/><path d="M395.3,207.5 Q406.0,234.8 411.9,262.1" stroke="#6c6258" stroke-width="1.4"/><path d="M416.8,203.3 Q428.0,224.2 431.0,245.1" stroke="#9a8b7c" stroke-width="1.2"/><path d="M392.0,202.1 Q396.0,234.6 400.1,267.0" stroke="#b0aaa1" stroke-width="0.9"/><path d="M404.7,127.7 Q409.0,145.5 416.8,163.3" stroke="#d5d1c9" stroke-width="0.8"/><path d="M387.7,77.7 Q390.1,108.0 395.7,138.3" stroke="#c9c4bc" stroke-width="1.3"/><path d="M388.6,201.0 Q398.8,226.3 406.5,251.7" stroke="#c1bcb4" stroke-width="1.6"/><path d="M397.4,86.6 Q404.3,104.9 402.9,123.2" stroke="#c9c4bc" stroke-width="1.3"/><path d="M352.5,-1.0 Q354.7,20.7 366.4,42.4" stroke="#e2ded6" stroke-width="1.4"/><path d="M393.8,132.3 Q400.0,148.6 405.3,165.0" stroke="#9a8b7c" stroke-width="0.8"/><path d="M384.6,82.6 Q392.5,105.2 393.9,127.9" stroke="#9a8b7c" stroke-width="0.9"/><path d="M413.1,197.8 Q420.5,225.2 431.5,252.6" stroke="#c1bcb4" stroke-width="1.9"/><path d="M416.3,158.2 Q420.5,185.9 422.3,213.5" stroke="#8a847c" stroke-width="1.0"/><path d="M409.1,105.3 Q416.8,124.1 421.5,143.0" stroke="#9a8b7c" stroke-width="1.4"/><path d="M416.3,75.1 Q425.2,107.2 427.8,139.4" stroke="#c1bcb4" stroke-width="2.0"/><path d="M398.8,198.1 Q407.4,227.9 413.7,257.6" stroke="#c9c4bc" stroke-width="0.8"/><path d="M402.0,87.0 Q408.8,105.7 412.8,124.4" stroke="#776758" stroke-width="1.1"/><path d="M414.8,76.4 Q420.4,92.7 419.4,109.0" stroke="#6c6258" stroke-width="1.8"/><path d="M401.6,123.4 Q403.7,150.5 413.3,177.7" stroke="#b0aaa1" stroke-width="1.8"/><path d="M414.1,78.6 Q421.7,94.3 425.5,110.0" stroke="#d5d1c9" stroke-width="1.4"/><path d="M425.1,175.8 Q429.7,192.6 436.3,209.3" stroke="#b0aaa1" stroke-width="1.6"/><path d="M422.5,209.3 Q421.9,222.5 427.4,235.6" stroke="#c1bcb4" stroke-width="1.8"/><path d="M404.2,73.8 Q415.8,102.0 420.4,130.3" stroke="#d5d1c9" stroke-width="1.8"/><path d="M356.9,30.2 Q362.1,52.2 362.9,74.1" stroke="#b0aaa1" stroke-width="1.1"/><path d="M378.6,85.9 Q386.5,110.4 388.3,134.9" stroke="#6c6258" stroke-width="1.5"/><path d="M364.1,24.5 Q365.2,39.2 367.6,53.9" stroke="#b0aaa1" stroke-width="1.9"/><path d="M424.7,25.7 Q426.6,43.3 432.9,61.0" stroke="#b0aaa1" stroke-width="1.6"/><path d="M394.5,43.5 Q395.9,62.1 407.1,80.8" stroke="#d5d1c9" stroke-width="1.0"/><path d="M414.4,168.7 Q415.0,180.3 421.5,191.8" stroke="#8a847c" stroke-width="2.0"/><path d="M405.4,193.8 Q405.9,215.1 412.1,236.4" stroke="#776758" stroke-width="1.5"/><path d="M424.6,134.9 Q435.4,151.1 436.4,167.2" stroke="#b0aaa1" stroke-width="1.8"/><path d="M426.1,94.2 Q435.9,119.6 444.9,145.1" stroke="#d5d1c9" stroke-width="1.9"/><path d="M395.1,148.6 Q393.1,160.9 400.9,173.3" stroke="#c1bcb4" stroke-width="1.4"/><path d="M432.4,39.4 Q437.7,51.4 438.3,63.4" stroke="#6c6258" stroke-width="1.8"/><path d="M423.7,83.8 Q428.7,114.1 434.0,144.3" stroke="#c1bcb4" stroke-width="1.9"/><path d="M402.5,187.4 Q406.5,218.7 415.9,250.0" stroke="#d5d1c9" stroke-width="1.5"/><path d="M393.4,81.3 Q397.0,107.9 401.7,134.5" stroke="#e2ded6" stroke-width="1.6"/><path d="M367.4,63.4 Q375.6,89.3 379.0,115.2" stroke="#b0aaa1" stroke-width="1.2"/><path d="M414.9,39.7 Q416.1,63.5 424.3,87.4" stroke="#8a847c" stroke-width="1.2"/><path d="M379.5,77.6 Q381.2,89.6 386.5,101.6" stroke="#d5d1c9" stroke-width="1.3"/><path d="M433.1,116.2 Q436.2,133.0 437.6,149.8" stroke="#e2ded6" stroke-width="0.9"/><path d="M396.1,126.0 Q400.9,148.9 401.5,171.7" stroke="#c9c4bc" stroke-width="1.3"/><path d="M374.6,31.8 Q380.5,59.2 380.8,86.5" stroke="#e2ded6" stroke-width="1.9"/><path d="M375.9,113.4 Q382.7,141.2 387.1,169.0" stroke="#d5d1c9" stroke-width="1.1"/><path d="M419.2,198.6 Q428.0,223.6 431.9,248.7" stroke="#c1bcb4" stroke-width="0.9"/></g>
<g fill="none" opacity=".6" filter="url(#b1)"><path d="M253.0,2.1 l33.8,4.0" stroke="#8d7865" stroke-width="1.0"/><path d="M204.2,4.0 l33.5,-11.5" stroke="#e2d8cc" stroke-width="1.2"/><path d="M201.7,4.3 l46.3,-12.5" stroke="#e2d8cc" stroke-width="1.1"/><path d="M87.0,4.7 l25.6,-2.2" stroke="#8d7865" stroke-width="1.2"/><path d="M294.9,-2.2 l49.6,-3.7" stroke="#b49f8b" stroke-width="1.0"/><path d="M314.1,7.1 l23.3,-6.8" stroke="#d8cdc0" stroke-width="1.3"/><path d="M337.9,-3.1 l46.0,2.2" stroke="#9f8a76" stroke-width="1.3"/><path d="M118.6,-1.1 l20.3,-2.3" stroke="#e2d8cc" stroke-width="1.1"/><path d="M218.9,-3.0 l36.5,3.3" stroke="#e2d8cc" stroke-width="1.7"/><path d="M24.5,10.9 l21.5,3.0" stroke="#d8cdc0" stroke-width="1.6"/><path d="M51.6,7.0 l21.8,-7.4" stroke="#9f8a76" stroke-width="1.8"/><path d="M74.7,4.7 l32.5,-0.2" stroke="#d8cdc0" stroke-width="1.6"/><path d="M209.8,8.6 l21.7,4.5" stroke="#b49f8b" stroke-width="1.3"/><path d="M107.6,9.4 l49.1,-1.8" stroke="#e2d8cc" stroke-width="1.2"/><path d="M277.6,5.8 l44.6,8.1" stroke="#8d7865" stroke-width="1.0"/><path d="M71.3,19.0 l25.1,-0.6" stroke="#d8cdc0" stroke-width="0.9"/><path d="M39.4,24.2 l37.9,-5.7" stroke="#b49f8b" stroke-width="0.8"/><path d="M23.5,2.2 l41.1,5.7" stroke="#e2d8cc" stroke-width="1.0"/><path d="M24.3,4.0 l31.2,-0.2" stroke="#9f8a76" stroke-width="1.3"/><path d="M172.2,9.2 l30.4,1.3" stroke="#b49f8b" stroke-width="1.3"/><path d="M40.0,-0.3 l45.5,8.4" stroke="#d8cdc0" stroke-width="1.5"/><path d="M154.7,9.1 l31.6,2.1" stroke="#8d7865" stroke-width="1.0"/><path d="M217.5,1.1 l30.0,-0.7" stroke="#9f8a76" stroke-width="1.1"/><path d="M236.3,5.4 l27.1,-3.3" stroke="#b49f8b" stroke-width="1.4"/><path d="M294.5,1.4 l27.1,-8.2" stroke="#8d7865" stroke-width="0.9"/><path d="M223.5,2.3 l26.2,2.4" stroke="#d8cdc0" stroke-width="1.2"/><path d="M245.8,5.4 l30.0,4.6" stroke="#d8cdc0" stroke-width="1.5"/><path d="M52.9,-1.8 l25.1,-1.7" stroke="#e2d8cc" stroke-width="1.5"/><path d="M205.9,9.6 l48.3,10.0" stroke="#e2d8cc" stroke-width="1.2"/><path d="M78.2,12.2 l22.1,-7.3" stroke="#e2d8cc" stroke-width="1.5"/><path d="M268.7,9.0 l35.5,-0.8" stroke="#e2d8cc" stroke-width="1.2"/><path d="M48.6,7.8 l40.3,-12.6" stroke="#b49f8b" stroke-width="1.8"/><path d="M236.6,7.0 l47.2,1.0" stroke="#e2d8cc" stroke-width="1.6"/><path d="M40.7,10.1 l20.3,2.7" stroke="#d8cdc0" stroke-width="0.9"/><path d="M140.4,3.9 l49.1,4.2" stroke="#d8cdc0" stroke-width="1.1"/><path d="M172.5,-2.3 l35.6,-10.1" stroke="#d8cdc0" stroke-width="1.3"/><path d="M104.9,0.9 l27.4,-0.5" stroke="#e2d8cc" stroke-width="0.9"/><path d="M74.0,9.6 l36.6,-3.4" stroke="#d8cdc0" stroke-width="1.6"/><path d="M171.3,-2.0 l35.8,-9.2" stroke="#8d7865" stroke-width="1.4"/><path d="M293.7,9.5 l30.5,-10.9" stroke="#b49f8b" stroke-width="1.6"/><path d="M37.2,18.1 l30.8,-5.8" stroke="#8d7865" stroke-width="0.8"/><path d="M37.5,5.0 l49.0,0.5" stroke="#d8cdc0" stroke-width="1.2"/><path d="M101.8,-1.0 l36.1,0.6" stroke="#e2d8cc" stroke-width="1.1"/><path d="M166.3,5.2 l45.9,8.3" stroke="#8d7865" stroke-width="1.8"/><path d="M315.2,-2.6 l38.0,-7.7" stroke="#8d7865" stroke-width="1.1"/><path d="M125.1,2.0 l33.9,-5.1" stroke="#e2d8cc" stroke-width="1.1"/><path d="M39.7,5.3 l34.7,-9.2" stroke="#e2d8cc" stroke-width="1.3"/><path d="M135.9,-0.9 l22.7,-3.2" stroke="#9f8a76" stroke-width="1.2"/><path d="M323.3,3.3 l35.7,2.2" stroke="#9f8a76" stroke-width="1.2"/><path d="M328.5,-3.9 l37.1,7.0" stroke="#9f8a76" stroke-width="1.8"/><path d="M235.9,7.8 l26.2,2.0" stroke="#d8cdc0" stroke-width="1.1"/><path d="M169.2,3.2 l40.5,-13.4" stroke="#d8cdc0" stroke-width="1.0"/><path d="M200.4,7.3 l48.3,0.6" stroke="#9f8a76" stroke-width="1.2"/><path d="M97.2,5.5 l22.1,4.5" stroke="#9f8a76" stroke-width="1.1"/><path d="M107.9,7.5 l43.6,0.4" stroke="#d8cdc0" stroke-width="1.8"/><path d="M166.7,1.5 l21.7,-6.0" stroke="#9f8a76" stroke-width="1.4"/><path d="M7.6,24.0 l42.6,-1.1" stroke="#d8cdc0" stroke-width="1.6"/><path d="M162.9,0.7 l38.3,6.2" stroke="#d8cdc0" stroke-width="1.0"/><path d="M28.4,16.6 l24.1,1.8" stroke="#e2d8cc" stroke-width="1.6"/><path d="M151.3,8.6 l41.5,4.9" stroke="#9f8a76" stroke-width="1.5"/></g>
<g fill="none" stroke="#a8a299" stroke-width="1.4" opacity=".75" filter="url(#b1)"><path d="M432,58 Q452,68 468,80"/><path d="M430,38 Q447,48 460,66"/><path d="M434,90 Q448,93 458,88"/><path d="M432,110 Q444,116 452,112"/><path d="M428,18 Q442,24 450,40"/><path d="M436,130 Q444,140 448,150"/></g>
<clipPath id="lc"><path d="M0,533 L26,575 L31,643 L49,711 L74,758 L90,764 L60,772 L0,772 Z"/></clipPath>
<g clip-path="url(#lc)"><rect x="-200" y="400" width="500" height="500" fill="url(#stc)" transform="rotate(84 20 650)"/><rect x="20" y="560" width="60" height="210" fill="#141213" opacity=".3" filter="url(#b7)" transform="rotate(-14 50 660)"/></g>
<clipPath id="lb"><path d="M0,766 L60,770 L82,762 L124,817 L103,889 L88,1024 L0,1024 Z"/></clipPath>
<g clip-path="url(#lb)"><rect x="-100" y="700" width="400" height="400" fill="url(#st)" transform="rotate(-3 50 900)"/><rect x="0" y="760" width="130" height="270" filter="url(#noise2)" opacity=".3"/></g>
<clipPath id="rb"><path d="M158,752 L205,739 L278,689 L420,640 L460,1024 L88,1024 L103,889 L124,817 L132,800 Z"/></clipPath>
<g clip-path="url(#rb)"><rect x="60" y="600" width="460" height="440" fill="#1d1b1c"/><path d="M60,562.0 L80,561.1 L100,560.0 L120,558.9 L140,558.0 L160,557.3 L180,556.8 L200,556.5 L220,556.4 L240,556.5 L260,556.8 L280,557.3 L300,558.0 L320,558.9 L340,560.0 L360,561.3 L380,562.8 L400,564.5 L420,566.4 L440,568.5 L460,570.8 L480,573.3 M60,576.5 L80,575.7 L100,574.7 L120,573.7 L140,572.9 L160,572.3 L180,571.8 L200,571.6 L220,571.6 L240,571.8 L260,572.2 L280,572.8 L300,573.5 L320,574.5 L340,575.7 L360,577.1 L380,578.7 L400,580.5 L420,582.5 L440,584.6 L460,587.0 L480,589.6 M60,590.7 L80,590.2 L100,589.4 L120,588.6 L140,588.1 L160,587.7 L180,587.6 L200,587.6 L220,587.9 L240,588.3 L260,589.0 L280,589.8 L300,590.9 L320,592.1 L340,593.6 L360,595.2 L380,597.1 L400,599.1 L420,601.4 L440,603.8 L460,606.5 L480,609.3 M60,604.9 L80,604.6 L100,604.1 L120,603.6 L140,603.3 L160,603.2 L180,603.4 L200,603.7 L220,604.2 L240,604.9 L260,605.8 L280,606.9 L300,608.2 L320,609.8 L340,611.5 L360,613.4 L380,615.5 L400,617.8 L420,620.3 L440,623.0 L460,625.9 L480,629.1 M60,619.0 L80,619.0 L100,618.8 L120,618.6 L140,618.6 L160,618.7 L180,619.1 L200,619.7 L220,620.5 L240,621.4 L260,622.6 L280,624.0 L300,625.6 L320,627.4 L340,629.3 L360,631.5 L380,633.9 L400,636.5 L420,639.3 L440,642.2 L460,645.4 L480,648.8 M60,633.2 L80,633.5 L100,633.5 L120,633.5 L140,633.8 L160,634.2 L180,634.9 L200,635.7 L220,636.8 L240,638.0 L260,639.4 L280,641.1 L300,642.9 L320,645.0 L340,647.2 L360,649.7 L380,652.3 L400,655.1 L420,658.2 L440,661.4 L460,664.9 L480,668.5 M60,647.4 L80,647.9 L100,648.2 L120,648.5 L140,649.0 L160,649.7 L180,650.6 L200,651.7 L220,653.0 L240,654.6 L260,656.3 L280,658.2 L300,660.3 L320,662.6 L340,665.1 L360,667.8 L380,670.7 L400,673.8 L420,677.1 L440,680.6 L460,684.3 L480,688.2 M60,661.6 L80,662.3 L100,662.9 L120,663.5 L140,664.2 L160,665.2 L180,666.4 L200,667.8 L220,669.3 L240,671.1 L260,673.1 L280,675.2 L300,677.6 L320,680.2 L340,683.0 L360,685.9 L380,689.1 L400,692.5 L420,696.1 L440,699.8 L460,703.8 L480,708.0 M60,675.7 L80,676.8 L100,677.6 L120,678.4 L140,679.5 L160,680.7 L180,682.1 L200,683.8 L220,685.6 L240,687.7 L260,689.9 L280,692.3 L300,695.0 L320,697.8 L340,700.8 L360,704.1 L380,707.5 L400,711.2 L420,715.0 L440,719.0 L460,723.3 L480,727.7 M60,689.9 L80,691.2 L100,692.3 L120,693.4 L140,694.7 L160,696.2 L180,697.9 L200,699.8 L220,701.9 L240,704.2 L260,706.7 L280,709.4 L300,712.3 L320,715.4 L340,718.7 L360,722.2 L380,725.9 L400,729.8 L420,733.9 L440,738.2 L460,742.7 L480,747.4 M60,704.1 L80,705.6 L100,707.0 L120,708.4 L140,709.9 L160,711.7 L180,713.7 L200,715.8 L220,718.2 L240,720.8 L260,723.5 L280,726.5 L300,729.7 L320,733.0 L340,736.6 L360,740.4 L380,744.3 L400,748.5 L420,752.9 L440,757.4 L460,762.2 L480,767.2 M60,718.2 L80,720.1 L100,721.7 L120,723.3 L140,725.2 L160,727.2 L180,729.4 L200,731.9 L220,734.5 L240,737.3 L260,740.3 L280,743.6 L300,747.0 L320,750.6 L340,754.5 L360,758.5 L380,762.7 L400,767.2 L420,771.8 L440,776.6 L460,781.7 L480,786.9 M60,732.4 L80,734.5 L100,736.4 L120,738.3 L140,740.4 L160,742.7 L180,745.2 L200,747.9 L220,750.8 L240,753.9 L260,757.2 L280,760.7 L300,764.4 L320,768.2 L340,772.3 L360,776.6 L380,781.1 L400,785.8 L420,790.7 L440,795.8 L460,801.1 L480,806.6 M60,746.6 L80,748.9 L100,751.1 L120,753.3 L140,755.6 L160,758.2 L180,760.9 L200,763.9 L220,767.1 L240,770.4 L260,774.0 L280,777.7 L300,781.7 L320,785.9 L340,790.2 L360,794.8 L380,799.5 L400,804.5 L420,809.7 L440,815.0 L460,820.6 L480,826.3 M60,760.8 L80,763.4 L100,765.8 L120,768.2 L140,770.8 L160,773.7 L180,776.7 L200,779.9 L220,783.3 L240,787.0 L260,790.8 L280,794.8 L300,799.0 L320,803.5 L340,808.1 L360,812.9 L380,817.9 L400,823.2 L420,828.6 L440,834.2 L460,840.0 L480,846.1 M60,774.9 L80,777.8 L100,780.5 L120,783.2 L140,786.1 L160,789.2 L180,792.5 L200,795.9 L220,799.6 L240,803.5 L260,807.6 L280,811.9 L300,816.4 L320,821.1 L340,826.0 L360,831.1 L380,836.3 L400,841.8 L420,847.5 L440,853.4 L460,859.5 L480,865.8 M60,789.1 L80,792.2 L100,795.2 L120,798.2 L140,801.3 L160,804.7 L180,808.2 L200,812.0 L220,815.9 L240,820.1 L260,824.4 L280,829.0 L300,833.7 L320,838.7 L340,843.8 L360,849.2 L380,854.8 L400,860.5 L420,866.5 L440,872.6 L460,879.0 L480,885.5 M60,803.3 L80,806.7 L100,809.9 L120,813.1 L140,816.5 L160,820.2 L180,824.0 L200,828.0 L220,832.2 L240,836.6 L260,841.2 L280,846.1 L300,851.1 L320,856.3 L340,861.7 L360,867.3 L380,873.2 L400,879.2 L420,885.4 L440,891.8 L460,898.4 L480,905.2 M60,817.4 L80,821.1 L100,824.6 L120,828.1 L140,831.8 L160,835.6 L180,839.7 L200,844.0 L220,848.5 L240,853.2 L260,858.1 L280,863.1 L300,868.4 L320,873.9 L340,879.6 L360,885.5 L380,891.6 L400,897.8 L420,904.3 L440,911.0 L460,917.9 L480,925.0 M60,831.6 L80,835.6 L100,839.3 L120,843.0 L140,847.0 L160,851.1 L180,855.5 L200,860.0 L220,864.8 L240,869.7 L260,874.9 L280,880.2 L300,885.8 L320,891.5 L340,897.5 L360,903.6 L380,910.0 L400,916.5 L420,923.3 L440,930.2 L460,937.4 L480,944.7 M60,845.8 L80,850.0 L100,854.0 L120,858.0 L140,862.2 L160,866.6 L180,871.2 L200,876.1 L220,881.1 L240,886.3 L260,891.7 L280,897.3 L300,903.1 L320,909.1 L340,915.3 L360,921.8 L380,928.4 L400,935.2 L420,942.2 L440,949.4 L460,956.8 L480,964.4 M60,859.9 L80,864.4 L100,868.7 L120,873.0 L140,877.5 L160,882.1 L180,887.0 L200,892.1 L220,897.4 L240,902.8 L260,908.5 L280,914.4 L300,920.5 L320,926.7 L340,933.2 L360,939.9 L380,946.8 L400,953.8 L420,961.1 L440,968.6 L460,976.3 L480,984.2 M60,874.1 L80,878.9 L100,883.4 L120,887.9 L140,892.7 L160,897.6 L180,902.8 L200,908.1 L220,913.6 L240,919.4 L260,925.3 L280,931.5 L300,937.8 L320,944.4 L340,951.1 L360,958.0 L380,965.2 L400,972.5 L420,980.1 L440,987.8 L460,995.7 L480,1003.9 M60,888.3 L80,893.3 L100,898.1 L120,902.9 L140,907.9 L160,913.1 L180,918.5 L200,924.1 L220,929.9 L240,935.9 L260,942.1 L280,948.6 L300,955.2 L320,962.0 L340,969.0 L360,976.2 L380,983.6 L400,991.2 L420,999.0 L440,1007.0 L460,1015.2 L480,1023.6 M60,902.5 L80,907.7 L100,912.8 L120,917.9 L140,923.1 L160,928.6 L180,934.3 L200,940.2 L220,946.2 L240,952.5 L260,959.0 L280,965.6 L300,972.5 L320,979.6 L340,986.8 L360,994.3 L380,1002.0 L400,1009.9 L420,1017.9 L440,1026.2 L460,1034.7 L480,1043.3 M60,916.6 L80,922.2 L100,927.5 L120,932.8 L140,938.4 L160,944.1 L180,950.0 L200,956.2 L220,962.5 L240,969.0 L260,975.8 L280,982.7 L300,989.9 L320,997.2 L340,1004.7 L360,1012.5 L380,1020.4 L400,1028.5 L420,1036.9 L440,1045.4 L460,1054.1 L480,1063.1 M60,930.8 L80,936.6 L100,942.2 L120,947.8 L140,953.6 L160,959.6 L180,965.8 L200,972.2 L220,978.8 L240,985.6 L260,992.6 L280,999.8 L300,1007.2 L320,1014.8 L340,1022.6 L360,1030.6 L380,1038.8 L400,1047.2 L420,1055.8 L440,1064.6 L460,1073.6 L480,1082.8 M60,945.0 L80,951.0 L100,956.9 L120,962.8 L140,968.8 L160,975.1 L180,981.6 L200,988.2 L220,995.1 L240,1002.1 L260,1009.4 L280,1016.9 L300,1024.5 L320,1032.4 L340,1040.5 L360,1048.7 L380,1057.2 L400,1065.9 L420,1074.7 L440,1083.8 L460,1093.1 L480,1102.5 M60,959.1 L80,965.5 L100,971.6 L120,977.7 L140,984.1 L160,990.6 L180,997.3 L200,1004.2 L220,1011.4 L240,1018.7 L260,1026.2 L280,1034.0 L300,1041.9 L320,1050.0 L340,1058.3 L360,1066.9 L380,1075.6 L400,1084.5 L420,1093.7 L440,1103.0 L460,1112.5 L480,1122.2 M60,973.3 L80,979.9 L100,986.3 L120,992.7 L140,999.3 L160,1006.1 L180,1013.1 L200,1020.3 L220,1027.7 L240,1035.3 L260,1043.0 L280,1051.0 L300,1059.2 L320,1067.6 L340,1076.2 L360,1085.0 L380,1094.0 L400,1103.2 L420,1112.6 L440,1122.2 L460,1132.0 L480,1142.0 M60,987.5 L80,994.3 L100,1001.0 L120,1007.7 L140,1014.5 L160,1021.6 L180,1028.8 L200,1036.3 L220,1043.9 L240,1051.8 L260,1059.9 L280,1068.1 L300,1076.6 L320,1085.2 L340,1094.1 L360,1103.2 L380,1112.4 L400,1121.9 L420,1131.5 L440,1141.4 L460,1151.4 L480,1161.7 M60,1001.7 L80,1008.8 L100,1015.7 L120,1022.6 L140,1029.7 L160,1037.1 L180,1044.6 L200,1052.3 L220,1060.2 L240,1068.4 L260,1076.7 L280,1085.2 L300,1093.9 L320,1102.8 L340,1112.0 L360,1121.3 L380,1130.8 L400,1140.5 L420,1150.5 L440,1160.6 L460,1170.9 L480,1181.4 M60,1015.8 L80,1023.2 L100,1030.4 L120,1037.6 L140,1045.0 L160,1052.6 L180,1060.3 L200,1068.3 L220,1076.5 L240,1084.9 L260,1093.5 L280,1102.3 L300,1111.3 L320,1120.5 L340,1129.8 L360,1139.4 L380,1149.2 L400,1159.2 L420,1169.4 L440,1179.8 L460,1190.4 L480,1201.2 M60,1030.0 L80,1037.6 L100,1045.1 L120,1052.6 L140,1060.2 L160,1068.1 L180,1076.1 L200,1084.4 L220,1092.8 L240,1101.5 L260,1110.3 L280,1119.4 L300,1128.6 L320,1138.1 L340,1147.7 L360,1157.6 L380,1167.6 L400,1177.9 L420,1188.3 L440,1199.0 L460,1209.8 L480,1220.9 M60,1044.2 L80,1052.1 L100,1059.8 L120,1067.5 L140,1075.4 L160,1083.5 L180,1091.9 L200,1100.4 L220,1109.1 L240,1118.0 L260,1127.1 L280,1136.4 L300,1146.0 L320,1155.7 L340,1165.6 L360,1175.7 L380,1186.0 L400,1196.5 L420,1207.3 L440,1218.2 L460,1229.3 L480,1240.6 M60,1058.3 L80,1066.5 L100,1074.5 L120,1082.5 L140,1090.7 L160,1099.0 L180,1107.6 L200,1116.4 L220,1125.4 L240,1134.6 L260,1143.9 L280,1153.5 L300,1163.3 L320,1173.3 L340,1183.5 L360,1193.9 L380,1204.4 L400,1215.2 L420,1226.2 L440,1237.4 L460,1248.8 L480,1260.3 M60,1072.5 L80,1081.0 L100,1089.2 L120,1097.4 L140,1105.9 L160,1114.5 L180,1123.4 L200,1132.4 L220,1141.7 L240,1151.1 L260,1160.8 L280,1170.6 L300,1180.7 L320,1190.9 L340,1201.3 L360,1212.0 L380,1222.8 L400,1233.9 L420,1245.1 L440,1256.6 L460,1268.2 L480,1280.1 M60,1086.7 L80,1095.4 L100,1103.9 L120,1112.4 L140,1121.1 L160,1130.0 L180,1139.1 L200,1148.5 L220,1158.0 L240,1167.7 L260,1177.6 L280,1187.7 L300,1198.0 L320,1208.5 L340,1219.2 L360,1230.1 L380,1241.2 L400,1252.6 L420,1264.1 L440,1275.8 L460,1287.7 L480,1299.8 M60,1100.9 L80,1109.8 L100,1118.6 L120,1127.4 L140,1136.3 L160,1145.5 L180,1154.9 L200,1164.5 L220,1174.2 L240,1184.2 L260,1194.4 L280,1204.8 L300,1215.3 L320,1226.1 L340,1237.1 L360,1248.3 L380,1259.6 L400,1271.2 L420,1283.0 L440,1295.0 L460,1307.1 L480,1319.5 M60,1115.0 L80,1124.3 L100,1133.3 L120,1142.3 L140,1151.6 L160,1161.0 L180,1170.7 L200,1180.5 L220,1190.5 L240,1200.8 L260,1211.2 L280,1221.9 L300,1232.7 L320,1243.7 L340,1255.0 L360,1266.4 L380,1278.1 L400,1289.9 L420,1301.9 L440,1314.2 L460,1326.6 L480,1339.2 M60,1129.2 L80,1138.7 L100,1148.0 L120,1157.3 L140,1166.8 L160,1176.5 L180,1186.4 L200,1196.5 L220,1206.8 L240,1217.3 L260,1228.0 L280,1238.9 L300,1250.0 L320,1261.3 L340,1272.8 L360,1284.6 L380,1296.5 L400,1308.6 L420,1320.9 L440,1333.4 L460,1346.1 L480,1359.0" fill="none" stroke="#777165" stroke-width="5.4"/><path d="M60,562.0 L80,561.1 L100,560.0 L120,558.9 L140,558.0 L160,557.3 L180,556.8 L200,556.5 L220,556.4 L240,556.5 L260,556.8 L280,557.3 L300,558.0 L320,558.9 L340,560.0 L360,561.3 L380,562.8 L400,564.5 L420,566.4 L440,568.5 L460,570.8 L480,573.3 M60,576.5 L80,575.7 L100,574.7 L120,573.7 L140,572.9 L160,572.3 L180,571.8 L200,571.6 L220,571.6 L240,571.8 L260,572.2 L280,572.8 L300,573.5 L320,574.5 L340,575.7 L360,577.1 L380,578.7 L400,580.5 L420,582.5 L440,584.6 L460,587.0 L480,589.6 M60,590.7 L80,590.2 L100,589.4 L120,588.6 L140,588.1 L160,587.7 L180,587.6 L200,587.6 L220,587.9 L240,588.3 L260,589.0 L280,589.8 L300,590.9 L320,592.1 L340,593.6 L360,595.2 L380,597.1 L400,599.1 L420,601.4 L440,603.8 L460,606.5 L480,609.3 M60,604.9 L80,604.6 L100,604.1 L120,603.6 L140,603.3 L160,603.2 L180,603.4 L200,603.7 L220,604.2 L240,604.9 L260,605.8 L280,606.9 L300,608.2 L320,609.8 L340,611.5 L360,613.4 L380,615.5 L400,617.8 L420,620.3 L440,623.0 L460,625.9 L480,629.1 M60,619.0 L80,619.0 L100,618.8 L120,618.6 L140,618.6 L160,618.7 L180,619.1 L200,619.7 L220,620.5 L240,621.4 L260,622.6 L280,624.0 L300,625.6 L320,627.4 L340,629.3 L360,631.5 L380,633.9 L400,636.5 L420,639.3 L440,642.2 L460,645.4 L480,648.8 M60,633.2 L80,633.5 L100,633.5 L120,633.5 L140,633.8 L160,634.2 L180,634.9 L200,635.7 L220,636.8 L240,638.0 L260,639.4 L280,641.1 L300,642.9 L320,645.0 L340,647.2 L360,649.7 L380,652.3 L400,655.1 L420,658.2 L440,661.4 L460,664.9 L480,668.5 M60,647.4 L80,647.9 L100,648.2 L120,648.5 L140,649.0 L160,649.7 L180,650.6 L200,651.7 L220,653.0 L240,654.6 L260,656.3 L280,658.2 L300,660.3 L320,662.6 L340,665.1 L360,667.8 L380,670.7 L400,673.8 L420,677.1 L440,680.6 L460,684.3 L480,688.2 M60,661.6 L80,662.3 L100,662.9 L120,663.5 L140,664.2 L160,665.2 L180,666.4 L200,667.8 L220,669.3 L240,671.1 L260,673.1 L280,675.2 L300,677.6 L320,680.2 L340,683.0 L360,685.9 L380,689.1 L400,692.5 L420,696.1 L440,699.8 L460,703.8 L480,708.0 M60,675.7 L80,676.8 L100,677.6 L120,678.4 L140,679.5 L160,680.7 L180,682.1 L200,683.8 L220,685.6 L240,687.7 L260,689.9 L280,692.3 L300,695.0 L320,697.8 L340,700.8 L360,704.1 L380,707.5 L400,711.2 L420,715.0 L440,719.0 L460,723.3 L480,727.7 M60,689.9 L80,691.2 L100,692.3 L120,693.4 L140,694.7 L160,696.2 L180,697.9 L200,699.8 L220,701.9 L240,704.2 L260,706.7 L280,709.4 L300,712.3 L320,715.4 L340,718.7 L360,722.2 L380,725.9 L400,729.8 L420,733.9 L440,738.2 L460,742.7 L480,747.4 M60,704.1 L80,705.6 L100,707.0 L120,708.4 L140,709.9 L160,711.7 L180,713.7 L200,715.8 L220,718.2 L240,720.8 L260,723.5 L280,726.5 L300,729.7 L320,733.0 L340,736.6 L360,740.4 L380,744.3 L400,748.5 L420,752.9 L440,757.4 L460,762.2 L480,767.2 M60,718.2 L80,720.1 L100,721.7 L120,723.3 L140,725.2 L160,727.2 L180,729.4 L200,731.9 L220,734.5 L240,737.3 L260,740.3 L280,743.6 L300,747.0 L320,750.6 L340,754.5 L360,758.5 L380,762.7 L400,767.2 L420,771.8 L440,776.6 L460,781.7 L480,786.9 M60,732.4 L80,734.5 L100,736.4 L120,738.3 L140,740.4 L160,742.7 L180,745.2 L200,747.9 L220,750.8 L240,753.9 L260,757.2 L280,760.7 L300,764.4 L320,768.2 L340,772.3 L360,776.6 L380,781.1 L400,785.8 L420,790.7 L440,795.8 L460,801.1 L480,806.6 M60,746.6 L80,748.9 L100,751.1 L120,753.3 L140,755.6 L160,758.2 L180,760.9 L200,763.9 L220,767.1 L240,770.4 L260,774.0 L280,777.7 L300,781.7 L320,785.9 L340,790.2 L360,794.8 L380,799.5 L400,804.5 L420,809.7 L440,815.0 L460,820.6 L480,826.3 M60,760.8 L80,763.4 L100,765.8 L120,768.2 L140,770.8 L160,773.7 L180,776.7 L200,779.9 L220,783.3 L240,787.0 L260,790.8 L280,794.8 L300,799.0 L320,803.5 L340,808.1 L360,812.9 L380,817.9 L400,823.2 L420,828.6 L440,834.2 L460,840.0 L480,846.1 M60,774.9 L80,777.8 L100,780.5 L120,783.2 L140,786.1 L160,789.2 L180,792.5 L200,795.9 L220,799.6 L240,803.5 L260,807.6 L280,811.9 L300,816.4 L320,821.1 L340,826.0 L360,831.1 L380,836.3 L400,841.8 L420,847.5 L440,853.4 L460,859.5 L480,865.8 M60,789.1 L80,792.2 L100,795.2 L120,798.2 L140,801.3 L160,804.7 L180,808.2 L200,812.0 L220,815.9 L240,820.1 L260,824.4 L280,829.0 L300,833.7 L320,838.7 L340,843.8 L360,849.2 L380,854.8 L400,860.5 L420,866.5 L440,872.6 L460,879.0 L480,885.5 M60,803.3 L80,806.7 L100,809.9 L120,813.1 L140,816.5 L160,820.2 L180,824.0 L200,828.0 L220,832.2 L240,836.6 L260,841.2 L280,846.1 L300,851.1 L320,856.3 L340,861.7 L360,867.3 L380,873.2 L400,879.2 L420,885.4 L440,891.8 L460,898.4 L480,905.2 M60,817.4 L80,821.1 L100,824.6 L120,828.1 L140,831.8 L160,835.6 L180,839.7 L200,844.0 L220,848.5 L240,853.2 L260,858.1 L280,863.1 L300,868.4 L320,873.9 L340,879.6 L360,885.5 L380,891.6 L400,897.8 L420,904.3 L440,911.0 L460,917.9 L480,925.0 M60,831.6 L80,835.6 L100,839.3 L120,843.0 L140,847.0 L160,851.1 L180,855.5 L200,860.0 L220,864.8 L240,869.7 L260,874.9 L280,880.2 L300,885.8 L320,891.5 L340,897.5 L360,903.6 L380,910.0 L400,916.5 L420,923.3 L440,930.2 L460,937.4 L480,944.7 M60,845.8 L80,850.0 L100,854.0 L120,858.0 L140,862.2 L160,866.6 L180,871.2 L200,876.1 L220,881.1 L240,886.3 L260,891.7 L280,897.3 L300,903.1 L320,909.1 L340,915.3 L360,921.8 L380,928.4 L400,935.2 L420,942.2 L440,949.4 L460,956.8 L480,964.4 M60,859.9 L80,864.4 L100,868.7 L120,873.0 L140,877.5 L160,882.1 L180,887.0 L200,892.1 L220,897.4 L240,902.8 L260,908.5 L280,914.4 L300,920.5 L320,926.7 L340,933.2 L360,939.9 L380,946.8 L400,953.8 L420,961.1 L440,968.6 L460,976.3 L480,984.2 M60,874.1 L80,878.9 L100,883.4 L120,887.9 L140,892.7 L160,897.6 L180,902.8 L200,908.1 L220,913.6 L240,919.4 L260,925.3 L280,931.5 L300,937.8 L320,944.4 L340,951.1 L360,958.0 L380,965.2 L400,972.5 L420,980.1 L440,987.8 L460,995.7 L480,1003.9 M60,888.3 L80,893.3 L100,898.1 L120,902.9 L140,907.9 L160,913.1 L180,918.5 L200,924.1 L220,929.9 L240,935.9 L260,942.1 L280,948.6 L300,955.2 L320,962.0 L340,969.0 L360,976.2 L380,983.6 L400,991.2 L420,999.0 L440,1007.0 L460,1015.2 L480,1023.6 M60,902.5 L80,907.7 L100,912.8 L120,917.9 L140,923.1 L160,928.6 L180,934.3 L200,940.2 L220,946.2 L240,952.5 L260,959.0 L280,965.6 L300,972.5 L320,979.6 L340,986.8 L360,994.3 L380,1002.0 L400,1009.9 L420,1017.9 L440,1026.2 L460,1034.7 L480,1043.3 M60,916.6 L80,922.2 L100,927.5 L120,932.8 L140,938.4 L160,944.1 L180,950.0 L200,956.2 L220,962.5 L240,969.0 L260,975.8 L280,982.7 L300,989.9 L320,997.2 L340,1004.7 L360,1012.5 L380,1020.4 L400,1028.5 L420,1036.9 L440,1045.4 L460,1054.1 L480,1063.1 M60,930.8 L80,936.6 L100,942.2 L120,947.8 L140,953.6 L160,959.6 L180,965.8 L200,972.2 L220,978.8 L240,985.6 L260,992.6 L280,999.8 L300,1007.2 L320,1014.8 L340,1022.6 L360,1030.6 L380,1038.8 L400,1047.2 L420,1055.8 L440,1064.6 L460,1073.6 L480,1082.8 M60,945.0 L80,951.0 L100,956.9 L120,962.8 L140,968.8 L160,975.1 L180,981.6 L200,988.2 L220,995.1 L240,1002.1 L260,1009.4 L280,1016.9 L300,1024.5 L320,1032.4 L340,1040.5 L360,1048.7 L380,1057.2 L400,1065.9 L420,1074.7 L440,1083.8 L460,1093.1 L480,1102.5 M60,959.1 L80,965.5 L100,971.6 L120,977.7 L140,984.1 L160,990.6 L180,997.3 L200,1004.2 L220,1011.4 L240,1018.7 L260,1026.2 L280,1034.0 L300,1041.9 L320,1050.0 L340,1058.3 L360,1066.9 L380,1075.6 L400,1084.5 L420,1093.7 L440,1103.0 L460,1112.5 L480,1122.2 M60,973.3 L80,979.9 L100,986.3 L120,992.7 L140,999.3 L160,1006.1 L180,1013.1 L200,1020.3 L220,1027.7 L240,1035.3 L260,1043.0 L280,1051.0 L300,1059.2 L320,1067.6 L340,1076.2 L360,1085.0 L380,1094.0 L400,1103.2 L420,1112.6 L440,1122.2 L460,1132.0 L480,1142.0 M60,987.5 L80,994.3 L100,1001.0 L120,1007.7 L140,1014.5 L160,1021.6 L180,1028.8 L200,1036.3 L220,1043.9 L240,1051.8 L260,1059.9 L280,1068.1 L300,1076.6 L320,1085.2 L340,1094.1 L360,1103.2 L380,1112.4 L400,1121.9 L420,1131.5 L440,1141.4 L460,1151.4 L480,1161.7 M60,1001.7 L80,1008.8 L100,1015.7 L120,1022.6 L140,1029.7 L160,1037.1 L180,1044.6 L200,1052.3 L220,1060.2 L240,1068.4 L260,1076.7 L280,1085.2 L300,1093.9 L320,1102.8 L340,1112.0 L360,1121.3 L380,1130.8 L400,1140.5 L420,1150.5 L440,1160.6 L460,1170.9 L480,1181.4 M60,1015.8 L80,1023.2 L100,1030.4 L120,1037.6 L140,1045.0 L160,1052.6 L180,1060.3 L200,1068.3 L220,1076.5 L240,1084.9 L260,1093.5 L280,1102.3 L300,1111.3 L320,1120.5 L340,1129.8 L360,1139.4 L380,1149.2 L400,1159.2 L420,1169.4 L440,1179.8 L460,1190.4 L480,1201.2 M60,1030.0 L80,1037.6 L100,1045.1 L120,1052.6 L140,1060.2 L160,1068.1 L180,1076.1 L200,1084.4 L220,1092.8 L240,1101.5 L260,1110.3 L280,1119.4 L300,1128.6 L320,1138.1 L340,1147.7 L360,1157.6 L380,1167.6 L400,1177.9 L420,1188.3 L440,1199.0 L460,1209.8 L480,1220.9 M60,1044.2 L80,1052.1 L100,1059.8 L120,1067.5 L140,1075.4 L160,1083.5 L180,1091.9 L200,1100.4 L220,1109.1 L240,1118.0 L260,1127.1 L280,1136.4 L300,1146.0 L320,1155.7 L340,1165.6 L360,1175.7 L380,1186.0 L400,1196.5 L420,1207.3 L440,1218.2 L460,1229.3 L480,1240.6 M60,1058.3 L80,1066.5 L100,1074.5 L120,1082.5 L140,1090.7 L160,1099.0 L180,1107.6 L200,1116.4 L220,1125.4 L240,1134.6 L260,1143.9 L280,1153.5 L300,1163.3 L320,1173.3 L340,1183.5 L360,1193.9 L380,1204.4 L400,1215.2 L420,1226.2 L440,1237.4 L460,1248.8 L480,1260.3 M60,1072.5 L80,1081.0 L100,1089.2 L120,1097.4 L140,1105.9 L160,1114.5 L180,1123.4 L200,1132.4 L220,1141.7 L240,1151.1 L260,1160.8 L280,1170.6 L300,1180.7 L320,1190.9 L340,1201.3 L360,1212.0 L380,1222.8 L400,1233.9 L420,1245.1 L440,1256.6 L460,1268.2 L480,1280.1 M60,1086.7 L80,1095.4 L100,1103.9 L120,1112.4 L140,1121.1 L160,1130.0 L180,1139.1 L200,1148.5 L220,1158.0 L240,1167.7 L260,1177.6 L280,1187.7 L300,1198.0 L320,1208.5 L340,1219.2 L360,1230.1 L380,1241.2 L400,1252.6 L420,1264.1 L440,1275.8 L460,1287.7 L480,1299.8 M60,1100.9 L80,1109.8 L100,1118.6 L120,1127.4 L140,1136.3 L160,1145.5 L180,1154.9 L200,1164.5 L220,1174.2 L240,1184.2 L260,1194.4 L280,1204.8 L300,1215.3 L320,1226.1 L340,1237.1 L360,1248.3 L380,1259.6 L400,1271.2 L420,1283.0 L440,1295.0 L460,1307.1 L480,1319.5 M60,1115.0 L80,1124.3 L100,1133.3 L120,1142.3 L140,1151.6 L160,1161.0 L180,1170.7 L200,1180.5 L220,1190.5 L240,1200.8 L260,1211.2 L280,1221.9 L300,1232.7 L320,1243.7 L340,1255.0 L360,1266.4 L380,1278.1 L400,1289.9 L420,1301.9 L440,1314.2 L460,1326.6 L480,1339.2 M60,1129.2 L80,1138.7 L100,1148.0 L120,1157.3 L140,1166.8 L160,1176.5 L180,1186.4 L200,1196.5 L220,1206.8 L240,1217.3 L260,1228.0 L280,1238.9 L300,1250.0 L320,1261.3 L340,1272.8 L360,1284.6 L380,1296.5 L400,1308.6 L420,1320.9 L440,1333.4 L460,1346.1 L480,1359.0" fill="none" stroke="#b1a997" stroke-width="3.6"/><rect x="80" y="640" width="390" height="390" filter="url(#noise2)" opacity=".3"/></g>
<clipPath id="rc"><path d="M205,739 L278,689 L330,660 L330,792 L278,768 L225,748 Z"/></clipPath>
<g clip-path="url(#rc)"><rect x="100" y="560" width="400" height="400" fill="url(#stc)" transform="rotate(-44 250 740)"/></g>
<g fill="none" stroke="#171516" filter="url(#b1)">
<path d="M26,575 L31,643 L44,705" stroke-width="5"/><path d="M42,700 L52,726 L76,760 L94,766" stroke-width="13"/>
<path d="M0,768 L60,771 L84,762" stroke-width="7"/>
<path d="M80,758 L122,815 L104,889 L88,1024" stroke-width="13"/>
<path d="M278,689 L205,739 L158,753 L140,786 L126,814" stroke-width="6"/>
<path d="M205,740 L225,749 L278,768 L330,792" stroke-width="5"/>
</g>
<ellipse cx="197" cy="786" rx="24" ry="9.5" fill="#171516"/><ellipse cx="197" cy="786.5" rx="17.5" ry="5.5" fill="#d4917a"/>
<circle cx="133" cy="933" r="19.5" fill="#1a1919"/><circle cx="133" cy="933" r="17" fill="#767370"/><circle cx="132" cy="932" r="13.5" fill="#5c5956"/>
<g fill="#1f1d1d"><rect x="125.5" y="925.5" width="5.5" height="5.5" rx="1.2"/><rect x="134.5" y="925.5" width="5.5" height="5.5" rx="1.2"/><rect x="125.5" y="934.5" width="5.5" height="5.5" rx="1.2"/><rect x="134.5" y="934.5" width="5.5" height="5.5" rx="1.2"/></g>
<circle cx="86" cy="792" r="14" fill="#151414"/>
<path d="M298,985 L360,820 L470,560 L702,520 L702,1024 L283,1024 Z" fill="#2a2625"/>
<g shape-rendering="crispEdges" fill="none" stroke="#2a2220" stroke-width="1"><path d="M81.5,298.5 H302.5 V463.5 H81.5 Z"/></g>
<rect x="75" y="293" width="12" height="12" fill="none" stroke="#2a211d" stroke-width="2"/>
<rect x="186.5" y="293" width="12" height="12" fill="none" stroke="#2a211d" stroke-width="2"/>
<rect x="297" y="293" width="12" height="12" fill="none" stroke="#2a211d" stroke-width="2"/>
<rect x="75" y="375" width="12" height="12" fill="none" stroke="#2a211d" stroke-width="2"/>
<rect x="297" y="375" width="12" height="12" fill="none" stroke="#2a211d" stroke-width="2"/>
<rect x="75" y="457" width="12" height="12" fill="none" stroke="#2a211d" stroke-width="2"/>
<rect x="186.5" y="457" width="12" height="12" fill="none" stroke="#2a211d" stroke-width="2"/>
<rect x="297" y="457" width="12" height="12" fill="none" stroke="#2a211d" stroke-width="2"/>
<g stroke="#2a2220" stroke-width="1.4"><path d="M193,370 V376 M193,386 V392 M182,381 H188 M198,381 H204"/></g><circle cx="193" cy="381" r="3.2" fill="none" stroke="#6b5a52" stroke-width=".8"/><rect x="192.3" y="380.3" width="1.4" height="1.4" fill="#222"/>
<path d="M194,308 C212,308 222,309 230,312 C240,316 246,321 253,326 C262,332 270,334 278,340 C284,345 287,350 289,357 C292,364 293,370 293.5,377 C294,386 293,395 291,402 C289,410 286,416 281,422 C276,429 270,433 261,437 C250,442 235,446 213,449 C200,451 190,452.5 182,452.5 C172,452.5 163,452 154,451 C143,449 134,446 126,443 C117,439 110,436 104,430 C98,425 94,421 92,416 C90,410 89.5,405 90,399 C91,389 93,380 95.5,371 C99,360 104,351 109.5,343 C115,335 121,328 129,323 C138,317 147,314 157,312 C168,310 182,308 194,308 Z" fill="none" stroke="#fbf8f4" stroke-width="1.3"/>
<path d="M194,308 C212,308 222,309 230,312 C240,316 246,321 253,326 C262,332 270,334 278,340 C284,345 287,350 289,357 C292,364 293,370 293.5,377 C294,386 293,395 291,402 C289,410 286,416 281,422 C276,429 270,433 261,437 C250,442 235,446 213,449 C200,451 190,452.5 182,452.5 C172,452.5 163,452 154,451 C143,449 134,446 126,443 C117,439 110,436 104,430 C98,425 94,421 92,416 C90,410 89.5,405 90,399 C91,389 93,380 95.5,371 C99,360 104,351 109.5,343 C115,335 121,328 129,323 C138,317 147,314 157,312 C168,310 182,308 194,308 Z" fill="none" stroke="#2b2320" stroke-width="1.3" stroke-dasharray="3 6" opacity=".45"/>
</svg>
</div>

<!-- ================= LAYERS PANEL ================= -->
<div id="panel">
  <div class="hdr"></div>
  <div class="hline" style="top:26px"></div>
  <div class="tabs"></div>
  <div class="hline" style="top:82px"></div>
  <div class="tab act" style="left:0;width:94px"><span style="left:20px;letter-spacing:.05px">Слои</span></div>
  <div class="tab" style="left:93px;width:117px"><span style="left:18px;letter-spacing:.07px">Каналы</span></div>
  <div class="tab" style="left:210px;width:127px"><span style="left:16.5px;letter-spacing:.44px">Контуры</span></div>
  <div class="tab" style="left:337px;width:153px"><span style="left:17px;letter-spacing:.86px">Коррекция</span></div>
  <div class="tab" style="left:490px;width:126px"><span style="left:16px;letter-spacing:-.3px">Свойства</span></div>
  <!-- header icons -->
  <svg class="ico" style="left:11px;top:8px" width="14" height="14" viewBox="0 0 14 14"><path d="M1.5 1.5 L12.5 12.5 M12.5 1.5 L1.5 12.5" stroke="#b4b4b4" stroke-width="2.2" fill="none"/></svg>
  <svg class="ico" style="left:666px;top:9px" width="16" height="12" viewBox="0 0 16 12"><path d="M6 1 L1.5 5.5 L6 10 M13.5 1 L9 5.5 L13.5 10" stroke="#c6c6c6" stroke-width="1.5" fill="none"/></svg>
  <svg class="ico" style="left:662px;top:48px" width="20" height="14" viewBox="0 0 20 14"><path d="M0 1.5H20M0 5.2H20M0 8.9H20M0 12.6H20" stroke="#c4c4c4" stroke-width="1.9"/></svg>

  <!-- filter row -->
  <div class="box" style="left:9px;top:101px;width:255px;height:36px"></div>
  <svg class="ico" style="left:26px;top:108px" width="22" height="22" viewBox="0 0 22 22"><circle cx="13.5" cy="8.5" r="6" fill="none" stroke="#d8d8d8" stroke-width="2.2"/><path d="M9.2 12.8 L2 20" stroke="#d8d8d8" stroke-width="3.2" stroke-linecap="round"/></svg>
  <div class="t" style="left:53px;top:107px;color:#f0f0f0;letter-spacing:.27px">Вид</div>
  <svg class="ico" style="left:242px;top:114px" width="14" height="10" viewBox="0 0 14 10"><path d="M1 1.5 L7 7.5 L13 1.5" stroke="#d6d6d6" stroke-width="1.8" fill="none"/></svg>
  <!-- filter icons -->
  <svg class="ico" style="left:356px;top:108px" width="26" height="22" viewBox="0 0 26 22"><rect x="1" y="1" width="24" height="20" fill="none" stroke="#dadada" stroke-width="2"/><path d="M4 17 L9.5 9 L13 14 L16.5 10.5 L22 17 Z" fill="#dadada"/></svg>
  <svg class="ico" style="left:405px;top:108px" width="23" height="23" viewBox="0 0 23 23"><circle cx="11.5" cy="11.5" r="10" fill="none" stroke="#dadada" stroke-width="2"/><path d="M18.6 4.4 A10 10 0 0 1 4.4 18.6 Z" fill="#d2d2d2"/></svg>
  <svg class="ico" style="left:455px;top:108px" width="20" height="22" viewBox="0 0 20 22"><path d="M0 0H20V5H17.5V3H11.8V19.2H14.5V22H5.5V19.2H8.2V3H2.5V5H0Z" fill="#dadada"/></svg>
  <svg class="ico" style="left:501px;top:107px" width="24" height="24" viewBox="0 0 24 24"><rect x="3.5" y="3.5" width="17" height="17" fill="none" stroke="#dadada" stroke-width="2"/><g fill="#535353" stroke="#dadada" stroke-width="1.6"><rect x="1" y="1" width="5" height="5"/><rect x="18" y="1" width="5" height="5"/><rect x="1" y="18" width="5" height="5"/><rect x="18" y="18" width="5" height="5"/></g></svg>
  <svg class="ico" style="left:551px;top:106px" width="22" height="26" viewBox="0 0 22 26"><path d="M7 1.2H15.5L21 6.7V19H7Z" fill="none" stroke="#dadada" stroke-width="2"/><path d="M15 1.5V7.2H20.8" fill="none" stroke="#dadada" stroke-width="1.8"/><rect x="1" y="11" width="11" height="14" rx="1.5" fill="#d0d0d0"/></svg>
  <!-- toggle -->
  <div class="abs" style="left:668px;top:101px;width:18px;height:36px;box-sizing:border-box;border:1.5px solid #6a6a6a;border-radius:9px;background:#4a4a4a"></div>
  <div class="abs" style="left:669px;top:101px;width:16px;height:16px;border-radius:8px;background:#dcdcdc"></div>

  <div class="abs" style="left:0;top:147px;width:696px;height:1px;background:#474747"></div>
  <!-- blend row -->
  <div class="box" style="left:9px;top:155px;width:390px;height:37px"></div>
  <div class="t" style="left:24.5px;top:161px;color:#f0f0f0;letter-spacing:.38px">Обычные</div>
  <svg class="ico" style="left:378px;top:169px" width="14" height="10" viewBox="0 0 14 10"><path d="M1 1.5 L7 7.5 L13 1.5" stroke="#d6d6d6" stroke-width="1.8" fill="none"/></svg>
  <div class="t" style="left:407.5px;top:161px;letter-spacing:.93px">Непрозрачность:</div>
  <div class="box" style="left:585px;top:155px;width:102px;height:37px"></div>
  <div class="abs" style="left:655px;top:156px;width:1px;height:35px;background:#686868"></div>
  <div class="t" style="left:592px;top:161px;color:#f0f0f0">100%</div>
  <svg class="ico" style="left:664px;top:169px" width="14" height="10" viewBox="0 0 14 10"><path d="M1 1.5 L7 7.5 L13 1.5" stroke="#d6d6d6" stroke-width="1.8" fill="none"/></svg>

  <div class="abs" style="left:0;top:200px;width:696px;height:1px;background:#474747"></div>
  <!-- lock row -->
  <div class="t" style="left:12.5px;top:215px;letter-spacing:.72px">Закрепить:</div>
  <svg class="ico" style="left:137px;top:216px" width="23" height="23" viewBox="0 0 23 23"><rect x="1" y="1" width="21" height="21" fill="#535353" stroke="#dcdcdc" stroke-width="2"/><g fill="#dcdcdc"><rect x="2" y="2" width="6.4" height="6.4"/><rect x="14.6" y="2" width="6.4" height="6.4"/><rect x="8.3" y="8.3" width="6.4" height="6.4"/><rect x="2" y="14.6" width="6.4" height="6.4"/><rect x="14.6" y="14.6" width="6.4" height="6.4"/></g></svg>
  <svg class="ico" style="left:180px;top:213px" width="28" height="30" viewBox="0 0 28 30"><path d="M25.5 1 C27 1.5 27.5 3 26.5 4.5 L14.5 21.5 L10 18 Z" fill="#dcdcdc"/><path d="M9 19.5 L13.5 23 C13 27 8 29.5 1 28.5 C4.5 26.5 4 21.5 9 19.5 Z" fill="#dcdcdc"/></svg>
  <svg class="ico" style="left:222px;top:215px" width="26" height="26" viewBox="0 0 26 26"><path d="M13 0 L17.5 5.5 H14.2 V11.8 H20.5 V8.5 L26 13 L20.5 17.5 V14.2 H14.2 V20.5 H17.5 L13 26 L8.5 20.5 H11.8 V14.2 H5.5 V17.5 L0 13 L5.5 8.5 V11.8 H11.8 V5.5 H8.5 Z" fill="#dcdcdc"/></svg>
  <svg class="ico" style="left:265px;top:214px" width="30" height="28" viewBox="0 0 30 28"><path d="M6 6 H19 L24 11 V22 H6 Z" fill="none" stroke="#dcdcdc" stroke-width="2.2"/><path d="M18.5 6 V11.5 H24" fill="none" stroke="#dcdcdc" stroke-width="1.8"/><g fill="#dcdcdc"><rect x="5" y="0" width="2.2" height="3.4"/><rect x="0" y="5" width="3.4" height="2.2"/><rect x="12" y="0.6" width="3" height="2"/><rect x="19" y="0.6" width="3" height="2"/><rect x="26.4" y="0.6" width="3" height="2"/><rect x="27.4" y="5" width="2" height="3"/><rect x="27.4" y="12" width="2" height="3"/><rect x="27.4" y="19" width="2" height="3"/><rect x="0.6" y="12" width="2" height="3"/><rect x="0.6" y="19" width="2" height="3"/><rect x="5" y="24.6" width="2.2" height="3.4"/><rect x="26.6" y="24.5" width="3.4" height="2.2"/><rect x="12" y="25.4" width="3" height="2"/><rect x="19" y="25.4" width="3" height="2"/></g></svg>
  <svg class="ico" style="left:312px;top:215px" width="22" height="25" viewBox="0 0 22 25"><path d="M5.5 11 V7.5 A5.5 5.5 0 0 1 16.5 7.5 V11" fill="none" stroke="#dcdcdc" stroke-width="2.4"/><rect x="0.5" y="10" width="21" height="14.5" rx="2.2" fill="#dcdcdc"/><circle cx="11" cy="17.3" r="2.6" fill="#535353"/></svg>
  <div class="t" style="left:492.5px;top:215px;letter-spacing:.43px">Заливка:</div>
  <div class="box" style="left:585px;top:208px;width:102px;height:37px"></div>
  <div class="abs" style="left:655px;top:209px;width:1px;height:35px;background:#686868"></div>
  <div class="t" style="left:592px;top:215px;color:#f0f0f0">100%</div>
  <svg class="ico" style="left:664px;top:222px" width="14" height="10" viewBox="0 0 14 10"><path d="M1 1.5 L7 7.5 L13 1.5" stroke="#d6d6d6" stroke-width="1.8" fill="none"/></svg>

  <!-- layer list -->
  <div class="abs" style="left:0;top:257px;width:696px;height:1px;background:#474747"></div>
  <div class="abs" style="left:0;top:258px;width:696px;height:417px;background:#4f4f4f"></div>
  <div class="abs" style="left:0;top:258px;width:64px;height:348px;background:#535353"></div>
  <div class="abs" style="left:64px;top:258px;width:600px;height:172px;background:#6b6b6b"></div>
  <div class="abs" style="left:0;top:430px;width:664px;height:2px;background:#474747"></div>
  <div class="abs" style="left:64px;top:432px;width:600px;height:174px;background:#535353"></div>
  <div class="abs" style="left:0;top:606px;width:664px;height:1px;background:#494949"></div>
  <!-- eye -->
  <svg class="ico" style="left:19px;top:336px" width="27" height="17" viewBox="0 0 27 17"><path d="M0.5 8.5 C5 1 22 1 26.5 8.5 C22 16 5 16 0.5 8.5 Z" fill="#dedede"/><circle cx="13.5" cy="8.3" r="5.6" fill="#535353"/><circle cx="13.5" cy="8.3" r="3.1" fill="#dedede"/><circle cx="11.6" cy="6.4" r="1.7" fill="#535353"/></svg>
  <!-- thumb brackets -->
  <div class="abs" style="left:66px;top:260px;width:42px;height:56px;border-left:2px solid #fff;border-top:2px solid #fff;box-sizing:border-box"></div>
  <div class="abs" style="left:152px;top:260px;width:44px;height:56px;border-right:2px solid #fff;border-top:2px solid #fff;box-sizing:border-box"></div>
  <div class="abs" id="thumb" style="left:70px;top:264px;width:122px;height:160px;background:#3b3b3b;overflow:hidden">
  <svg style="position:absolute;left:2px;top:2px" width="118" height="150" viewBox="0 0 118 150">
<defs><filter id="tb1" x="-20%" y="-20%" width="140%" height="140%"><feGaussianBlur stdDeviation="0.8"/></filter><filter id="tb2" x="-30%" y="-30%" width="160%" height="160%"><feGaussianBlur stdDeviation="2"/></filter></defs>
<rect width="118" height="150" fill="#e9e7e0"/>
<rect x="35" y="0" width="6" height="14" fill="#8f8c84"/>
<g filter="url(#tb1)">
<path d="M0,58 L12,70 L28,78 L36,90 L30,150 L0,150 Z" fill="#141213"/>
<path d="M82,82 L97,91 L118,99 L118,150 L70,150 Z" fill="#141213"/>
<path d="M34,88 L42,100 L40,150 L26,150 Z" fill="#5c5855"/>
<path d="M84,82 L74,104 L72,150 L86,150 L88,100 Z" fill="#4a4644"/>
<rect x="38" y="92" width="42" height="60" fill="#c39070"/>
<path d="M26,52 Q24,30 36,20 Q52,8 74,10 Q88,18 90,42 L88,58 Q84,80 78,92 Q70,106 60,108 Q46,108 38,94 Q28,76 26,52 Z" fill="#d2a07e"/>
<path d="M24,60 Q21,38 32,22 Q48,8 74,10 Q90,20 90,48 L87,58 Q87,42 80,33 Q62,27 46,33 Q33,40 29,60 Z" fill="#8f8880"/><path d="M30,40 Q36,24 52,17 Q66,13 80,20" stroke="#a9a39a" stroke-width="4" fill="none" opacity=".8"/>
<path d="M40,20 Q58,12 78,18" stroke="#b3ada4" stroke-width="3" fill="none"/>
<ellipse cx="58" cy="44" rx="16" ry="8" fill="#e0b494" opacity=".8"/>
<path d="M38,57 L54,58 M62,58 L80,55" stroke="#4c3a30" stroke-width="2" fill="none"/>
<ellipse cx="45" cy="61" rx="4" ry="1.8" fill="#3a2b25"/><ellipse cx="69" cy="60" rx="4" ry="1.8" fill="#3a2b25"/>
<path d="M56,64 L54,78 Q58,81 63,78" stroke="#b07d62" stroke-width="2" fill="none"/>
<path d="M48,87 Q60,90 72,86" stroke="#9c6a58" stroke-width="1.8" fill="none"/>
<ellipse cx="88" cy="64" rx="3" ry="8" fill="#cf9c7c"/><ellipse cx="26" cy="66" rx="2.5" ry="8" fill="#c99474"/>
</g>
</svg>
  </div>
  <div class="t" style="left:209px;top:335px;color:#f2f2f2;letter-spacing:-.14px">Слой 1</div>
  <div class="t" style="left:210px;top:509px;color:#f2f2f2;font-size:21px;letter-spacing:.5px">Фон</div>
  <svg class="ico" style="left:609px;top:506px" width="22" height="24" viewBox="0 0 22 24"><path d="M5.5 9 V7 A5.5 5.5 0 0 1 16.5 7 V9" fill="none" stroke="#e2e2e2" stroke-width="2"/><rect x="1.5" y="8.5" width="19" height="14" rx="1.5" fill="none" stroke="#e2e2e2" stroke-width="2"/><circle cx="11" cy="15.5" r="2.4" fill="#e2e2e2"/></svg>

  <!-- bottom toolbar -->
  <div class="abs" style="left:0;top:674px;width:696px;height:1px;background:#464646"></div>
  <div class="abs" style="left:0;top:675px;width:696px;height:49px;background:#535353"></div>
  <div class="abs" style="left:0;top:724px;width:696px;height:2px;background:#3a3a3a"></div>
  <div class="abs" style="left:0;top:726px;width:696px;height:15px;background:#4b4b4b"></div>
  <div class="abs" style="left:328px;top:728px;width:39px;height:7px;background:repeating-linear-gradient(90deg,#3e3e3e 0 2px,transparent 2px 4px)"></div>
  <svg class="ico" style="left:287px;top:692px" width="29" height="15" viewBox="0 0 29 15"><g fill="none" stroke="#a3a3a0" stroke-width="2.4"><rect x="1.4" y="1.4" width="15" height="12" rx="6"/><rect x="12.6" y="1.4" width="15" height="12" rx="6"/></g><rect x="8.5" y="6" width="12" height="3" fill="#a3a3a0" stroke="#535353" stroke-width="1.2"/></svg>
  <div class="abs" style="left:345px;top:682px;font:italic 29px/32px 'Liberation Sans',sans-serif;color:#dcdcdc;letter-spacing:-1.5px">fx</div>
  <svg class="ico" style="left:372px;top:716px" width="6" height="4" viewBox="0 0 6 4"><path d="M0 0H6V1.6H4.2V4H1.8V1.6H0Z" fill="#e8e8e8"/></svg>
  <svg class="ico" style="left:398px;top:688px" width="26" height="20" viewBox="0 0 26 20"><rect x="0" y="0" width="26" height="20" rx="1.5" fill="#dadada"/><circle cx="12.6" cy="9.8" r="6.2" fill="#535353"/></svg>
  <svg class="ico" style="left:453px;top:687px" width="23" height="23" viewBox="0 0 23 23"><circle cx="11.5" cy="11.5" r="10" fill="none" stroke="#dadada" stroke-width="2"/><path d="M18.6 4.4 A10 10 0 0 1 4.4 18.6 Z" fill="#d2d2d2"/></svg>
  <svg class="ico" style="left:480px;top:716px" width="6" height="4" viewBox="0 0 6 4"><path d="M0 0H6V1.6H4.2V4H1.8V1.6H0Z" fill="#e8e8e8"/></svg>
  <svg class="ico" style="left:506px;top:688px" width="25" height="21" viewBox="0 0 25 21"><path d="M0.5 2.5 Q0.5 0.5 2.5 0.5 H10 L12 2.6 H0.5Z" fill="#d6d6d6"/><rect x="0" y="4.2" width="25" height="16.5" rx="1.6" fill="#d6d6d6"/></svg>
  <svg class="ico" style="left:561px;top:688px" width="22" height="21" viewBox="0 0 22 21"><path d="M1.2 1.2 H20.2 V19.6 H9.5 L1.2 11.5 Z" fill="#2f2f2f" stroke="#e2e2e2" stroke-width="2.2" stroke-linejoin="round"/><path d="M1.5 11.5 H9.5 V19.5 Z" fill="#e2e2e2"/></svg>
  <svg class="ico" style="left:614px;top:687px" width="24" height="25" viewBox="0 0 24 25"><path d="M8.5 3.2 V1.2 H15.5 V3.2" fill="none" stroke="#e2e2e2" stroke-width="2"/><rect x="0.5" y="3.2" width="23" height="2.6" fill="#e2e2e2"/><path d="M3.3 6 L4.6 23.6 H19.4 L20.7 6" fill="none" stroke="#e2e2e2" stroke-width="2.2"/><path d="M8.3 8.5V20.8M12 8.5V20.8M15.7 8.5V20.8" stroke="#e2e2e2" stroke-width="2"/></svg>
</div>

<!-- ================= CONTEXT MENU ================= -->
<div id="menu">
  <div class="hl"></div>
  <div class="sep" style="top:53px"></div>
  <div class="sep" style="top:349px"></div>
  <div class="sep" style="top:475px"></div>
  <div class="mi" style="top:8px;letter-spacing:.77px">Свободное трансформирование</div>
  <div class="mi" style="top:66px;letter-spacing:.69px">Масштабирование</div>
  <div class="mi" style="top:100px;letter-spacing:.63px">Поворот</div>
  <div class="mi" style="top:134px;letter-spacing:.6px">Наклон</div>
  <div class="mi" style="top:168px;letter-spacing:1.05px">Искажение</div>
  <div class="mi" style="top:202px;letter-spacing:.86px">Перспектива</div>
  <div class="mi" style="top:236px;letter-spacing:.4px;color:#fff">Деформация</div>
  <div class="mi dis" style="top:270px;letter-spacing:.93px">Масштаб с учетом содержимого</div>
  <div class="mi dis" style="top:304px;letter-spacing:.6px">Марионеточная деформация</div>
  <div class="mi" style="top:362px;letter-spacing:.52px">Поворот на 180°</div>
  <div class="mi" style="top:396px;letter-spacing:.68px">Повернуть на 90° по ч. с.</div>
  <div class="mi" style="top:430px;letter-spacing:.71px">Повернуть на 90° против ч. с.</div>
  <div class="mi" style="top:488px;letter-spacing:.83px">Отразить по горизонтали</div>
  <div class="mi" style="top:522px;letter-spacing:.69px">Отразить по вертикали</div>
</div>
</body>
</html>
